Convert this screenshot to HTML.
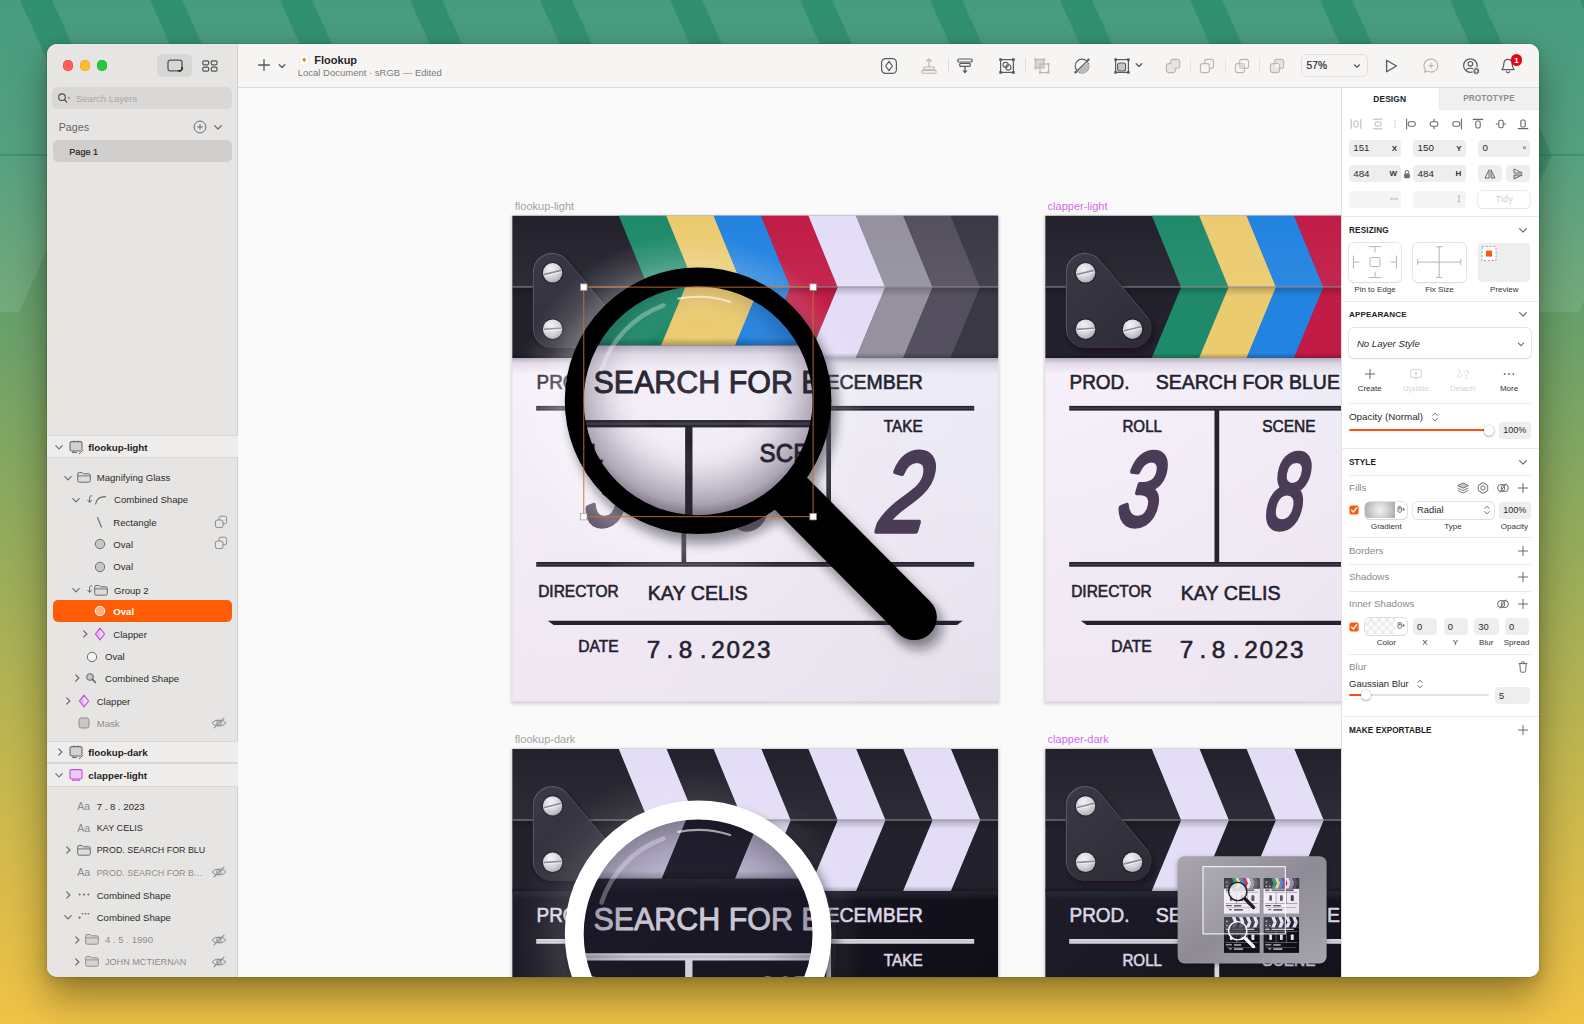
<!DOCTYPE html>
<html lang="en"><head><meta charset="utf-8"><title>Flookup — Sketch</title>
<style>
*{box-sizing:border-box;margin:0;padding:0}
html,body{width:1584px;height:1024px;overflow:hidden}
body{position:relative;font-family:"Liberation Sans",sans-serif;background:#8aa95e;color:#222;-webkit-font-smoothing:antialiased}
.abs{position:absolute}
#bg{position:absolute;left:0;top:0;width:1584px;height:1024px}
#win{position:absolute;left:47px;top:44px;width:1491.5px;height:933px;border-radius:10px;background:#fafafa;overflow:hidden;
 box-shadow:0 20px 38px 0 rgba(25,20,0,.40),0 2px 12px rgba(20,30,10,.16),0 0 0 .5px rgba(0,0,0,.16)}
#sidebar{position:absolute;left:0;top:0;width:191px;height:933px;background:#e7e5e3;border-right:1px solid #d3d1cf}
#toolbar{position:absolute;left:191px;top:0;width:1300.5px;height:43.5px;background:#f6f5f4;border-bottom:1px solid #dcdad8}
#canvas{position:absolute;left:191px;top:43.5px;width:1102.5px;height:889.5px;background:#fafafa;overflow:hidden}
#insp{position:absolute;left:1293.5px;top:43.5px;width:198px;height:889.5px;background:#fff;box-shadow:inset 1px 0 0 #e2e2e2}
svg{position:absolute;overflow:visible}
.t{position:absolute;white-space:nowrap;line-height:1}

</style></head>
<body>
<svg id="bg" width="1584" height="1024" viewBox="0 0 1584 1024">
<defs>
<linearGradient id="bgg" x1="0" y1="0" x2="0" y2="1">
<stop offset="0" stop-color="#2f8f70"/><stop offset="0.15" stop-color="#3f9570"/><stop offset="0.30" stop-color="#66a06c"/>
<stop offset="0.50" stop-color="#8faa5d"/><stop offset="0.72" stop-color="#bdb550"/><stop offset="0.88" stop-color="#dcbc49"/><stop offset="1" stop-color="#f0c246"/>
</linearGradient>
<linearGradient id="lowfade" x1="0" y1="155" x2="0" y2="312" gradientUnits="userSpaceOnUse">
<stop offset="0" stop-color="#fff" stop-opacity=".12"/><stop offset="1" stop-color="#fff" stop-opacity=".10"/></linearGradient>
</defs>
<rect width="1584" height="1024" fill="url(#bgg)"/>
<polygon fill="#fff" fill-opacity=".115" points="-208.9,-2.0 -110.9,-2.0 -40.2,155.0 -138.2,155.0"/>
<polygon fill="url(#lowfade)" points="-138.2,155.0 -40.2,155.0 -110.9,312.0 -208.9,312.0"/>
<polygon fill="#fff" fill-opacity=".115" points="-78.9,-2.0 19.1,-2.0 89.8,155.0 -8.2,155.0"/>
<polygon fill="url(#lowfade)" points="-8.2,155.0 89.8,155.0 19.1,312.0 -78.9,312.0"/>
<polygon fill="#fff" fill-opacity=".115" points="51.1,-2.0 149.1,-2.0 219.8,155.0 121.8,155.0"/>
<polygon fill="url(#lowfade)" points="121.8,155.0 219.8,155.0 149.1,312.0 51.1,312.0"/>
<polygon fill="#fff" fill-opacity=".115" points="181.1,-2.0 279.1,-2.0 349.8,155.0 251.8,155.0"/>
<polygon fill="url(#lowfade)" points="251.8,155.0 349.8,155.0 279.1,312.0 181.1,312.0"/>
<polygon fill="#fff" fill-opacity=".115" points="311.1,-2.0 409.1,-2.0 479.8,155.0 381.8,155.0"/>
<polygon fill="url(#lowfade)" points="381.8,155.0 479.8,155.0 409.1,312.0 311.1,312.0"/>
<polygon fill="#fff" fill-opacity=".115" points="441.1,-2.0 539.1,-2.0 609.8,155.0 511.8,155.0"/>
<polygon fill="url(#lowfade)" points="511.8,155.0 609.8,155.0 539.1,312.0 441.1,312.0"/>
<polygon fill="#fff" fill-opacity=".115" points="571.1,-2.0 669.1,-2.0 739.8,155.0 641.8,155.0"/>
<polygon fill="url(#lowfade)" points="641.8,155.0 739.8,155.0 669.1,312.0 571.1,312.0"/>
<polygon fill="#fff" fill-opacity=".115" points="701.1,-2.0 799.1,-2.0 869.8,155.0 771.8,155.0"/>
<polygon fill="url(#lowfade)" points="771.8,155.0 869.8,155.0 799.1,312.0 701.1,312.0"/>
<polygon fill="#fff" fill-opacity=".115" points="831.1,-2.0 929.1,-2.0 999.8,155.0 901.8,155.0"/>
<polygon fill="url(#lowfade)" points="901.8,155.0 999.8,155.0 929.1,312.0 831.1,312.0"/>
<polygon fill="#fff" fill-opacity=".115" points="961.1,-2.0 1059.1,-2.0 1129.8,155.0 1031.8,155.0"/>
<polygon fill="url(#lowfade)" points="1031.8,155.0 1129.8,155.0 1059.1,312.0 961.1,312.0"/>
<polygon fill="#fff" fill-opacity=".115" points="1091.1,-2.0 1189.1,-2.0 1259.8,155.0 1161.8,155.0"/>
<polygon fill="url(#lowfade)" points="1161.8,155.0 1259.8,155.0 1189.1,312.0 1091.1,312.0"/>
<polygon fill="#fff" fill-opacity=".115" points="1221.1,-2.0 1319.1,-2.0 1389.8,155.0 1291.8,155.0"/>
<polygon fill="url(#lowfade)" points="1291.8,155.0 1389.8,155.0 1319.1,312.0 1221.1,312.0"/>
<polygon fill="#fff" fill-opacity=".115" points="1351.1,-2.0 1449.1,-2.0 1519.8,155.0 1421.8,155.0"/>
<polygon fill="url(#lowfade)" points="1421.8,155.0 1519.8,155.0 1449.1,312.0 1351.1,312.0"/>
<polygon fill="#fff" fill-opacity=".115" points="1481.1,-2.0 1579.1,-2.0 1649.8,155.0 1551.8,155.0"/>
<polygon fill="url(#lowfade)" points="1551.8,155.0 1649.8,155.0 1579.1,312.0 1481.1,312.0"/>
<polygon fill="#fff" fill-opacity=".115" points="1611.1,-2.0 1709.1,-2.0 1779.8,155.0 1681.8,155.0"/>
<polygon fill="url(#lowfade)" points="1681.8,155.0 1779.8,155.0 1709.1,312.0 1611.1,312.0"/>
<polygon fill="#fff" fill-opacity=".115" points="1741.1,-2.0 1839.1,-2.0 1909.8,155.0 1811.8,155.0"/>
<polygon fill="url(#lowfade)" points="1811.8,155.0 1909.8,155.0 1839.1,312.0 1741.1,312.0"/>
<rect x="0" y="154" width="1584" height="2" fill="#2c8566" fill-opacity=".55"/>
</svg>
<div id="win">
<div id="sidebar">
<div class="abs" style="left:16.10px;top:16.30px;width:10.40px;height:10.40px;border-radius:50%;background:#fe5f57;box-shadow:inset 0 0 0 .5px #e2463f"></div>
<div class="abs" style="left:33.00px;top:16.30px;width:10.40px;height:10.40px;border-radius:50%;background:#febc2e;box-shadow:inset 0 0 0 .5px #dfa023"></div>
<div class="abs" style="left:49.50px;top:16.30px;width:10.40px;height:10.40px;border-radius:50%;background:#28c840;box-shadow:inset 0 0 0 .5px #1dad2b"></div>
<div class="abs" style="left:110.00px;top:10.00px;width:35.00px;height:23.00px;border-radius:5px;background:#d9d7d5"></div>
<svg style="left:120.00px;top:15.00px;" width="16" height="13" viewBox="0 0 16 13"><rect x="1" y="1.1" width="14" height="10.8" rx="2.4" fill="none" stroke="#555" stroke-width="1.3"/><path d="M11.2 11.9 h1.4 a2.4 2.4 0 0 0 2.4 -2.4 v-1.6" fill="none" stroke="#2a2a2a" stroke-width="1.6"/></svg>
<svg style="left:155.00px;top:15.50px;" width="16" height="12" viewBox="0 0 16 12"><rect x="0.8" y="0.8" width="5.8" height="4" rx="1.2" fill="none" stroke="#555" stroke-width="1.2"/><rect x="0.8" y="7.2" width="5.8" height="4" rx="1.2" fill="none" stroke="#555" stroke-width="1.2"/><rect x="9.2" y="0.8" width="5.8" height="4" rx="1.2" fill="none" stroke="#555" stroke-width="1.2"/><rect x="9.2" y="7.2" width="5.8" height="4" rx="1.2" fill="none" stroke="#555" stroke-width="1.2"/></svg>
<div class="abs" style="left:5.00px;top:43.20px;width:180.00px;height:22.20px;border-radius:5.5px;background:#dad8d6"></div>
<svg style="left:10.00px;top:48.00px;" width="14" height="12" viewBox="0 0 14 12"><circle cx="5" cy="5.2" r="3.3" fill="none" stroke="#4a4a4a" stroke-width="1.1"/><path d="M7.4 7.7 L9.8 10.2" stroke="#4a4a4a" stroke-width="1.2" stroke-linecap="round"/><path d="M10.6 5.6 h2.6 l-1.3 1.5z" fill="#4a4a4a"/></svg>
<div class="t" style="top:50.27px;font-size:9.5px;color:#a9a7a5;left:29.00px;">Search Layers</div>
<div class="t" style="top:78.04px;font-size:10.7px;color:#666;left:11.70px;">Pages</div>
<svg style="left:146.00px;top:76.00px;" width="14" height="14" viewBox="0 0 14 14"><circle cx="7" cy="7" r="5.9" fill="none" stroke="#6b6b6b" stroke-width="1"/><path d="M7 4.2 V9.8 M4.2 7 H9.8" stroke="#6b6b6b" stroke-width="1"/></svg>
<svg style="left:166.30px;top:77.60px;" width="10" height="10" viewBox="0 0 10 10"><path d="M1.6 3.5999999999999996 L5 7.0 L8.4 3.5999999999999996" fill="none" stroke="#6b6b6b" stroke-width="1.2" stroke-linecap="round" stroke-linejoin="round"/></svg>
<div class="abs" style="left:5.50px;top:96.00px;width:179.50px;height:22.30px;border-radius:5px;background:#d1cfcd"></div>
<div class="t" style="top:104.05px;font-size:9.1px;color:#1e1e1e;left:22.30px;-webkit-text-stroke:.2px #1e1e1e;">Page 1</div>
<div class="abs" style="left:0.00px;top:391.00px;width:191.00px;height:23.30px;background:#eeedec;border-top:1px solid #d9d7d5;border-bottom:1px solid #d9d7d5"></div><svg style="left:7.30px;top:397.65px;" width="10" height="10" viewBox="0 0 10 10"><path d="M1.7999999999999998 3.6999999999999997 L5 6.8999999999999995 L8.2 3.6999999999999997" fill="none" stroke="#6b6b6b" stroke-width="1.2" stroke-linecap="round" stroke-linejoin="round"/></svg><svg style="left:21.50px;top:396.15px;" width="16" height="15" viewBox="0 0 16 15"><rect x="1" y="1.6" width="12" height="9.4" rx="1.8" fill="#d4d2d0" stroke="#6b6b6b" stroke-width="1.1"/><path d="M5 .6 V1.6 M9 .6 V1.6 M4 11 V13 M3.4 12.6 H8" stroke="#6b6b6b" stroke-width="1" fill="none"/><path d="M9.3 13.6 L13.6 9.3 L14.6 10.3 L10.3 14.6 Z" fill="#6b6b6b" stroke="#eeedec" stroke-width=".8"/></svg><div class="t" style="top:399.19px;font-size:9.8px;color:#1e1e1e;font-weight:bold;left:41.30px;">flookup-light</div>
<div class="abs" style="left:0.00px;top:696.70px;width:191.00px;height:22.50px;background:#eeedec;border-top:1px solid #d9d7d5;border-bottom:1px solid #d9d7d5"></div><svg style="left:8.00px;top:702.95px;" width="10" height="10" viewBox="0 0 10 10"><path d="M3.6999999999999997 1.7999999999999998 L6.8999999999999995 5 L3.6999999999999997 8.2" fill="none" stroke="#6b6b6b" stroke-width="1.2" stroke-linecap="round" stroke-linejoin="round"/></svg><svg style="left:21.50px;top:701.45px;" width="16" height="15" viewBox="0 0 16 15"><rect x="1" y="1.6" width="12" height="9.4" rx="1.8" fill="#d4d2d0" stroke="#6b6b6b" stroke-width="1.1"/><path d="M5 .6 V1.6 M9 .6 V1.6 M4 11 V13 M3.4 12.6 H8" stroke="#6b6b6b" stroke-width="1" fill="none"/><path d="M9.3 13.6 L13.6 9.3 L14.6 10.3 L10.3 14.6 Z" fill="#6b6b6b" stroke="#eeedec" stroke-width=".8"/></svg><div class="t" style="top:704.49px;font-size:9.8px;color:#1e1e1e;font-weight:bold;left:41.30px;">flookup-dark</div>
<div class="abs" style="left:0.00px;top:719.20px;width:191.00px;height:23.50px;background:#eeedec;border-top:1px solid #d9d7d5;border-bottom:1px solid #d9d7d5"></div><svg style="left:7.30px;top:725.95px;" width="10" height="10" viewBox="0 0 10 10"><path d="M1.7999999999999998 3.6999999999999997 L5 6.8999999999999995 L8.2 3.6999999999999997" fill="none" stroke="#6b6b6b" stroke-width="1.2" stroke-linecap="round" stroke-linejoin="round"/></svg><svg style="left:21.50px;top:724.45px;" width="15" height="14" viewBox="0 0 15 14"><rect x="1" y="1.6" width="12" height="9.4" rx="1.6" fill="#f0c9f7" stroke="#c84be6" stroke-width="1.1"/><path d="M4 11 V13 M10 11 V13 M3.4 12.3 H10.6" stroke="#c84be6" stroke-width="1" fill="none"/></svg><div class="t" style="top:727.49px;font-size:9.8px;color:#1e1e1e;font-weight:bold;left:41.30px;">clapper-light</div>
<svg style="left:15.70px;top:428.70px;" width="10" height="10" viewBox="0 0 10 10"><path d="M1.7999999999999998 3.6999999999999997 L5 6.8999999999999995 L8.2 3.6999999999999997" fill="none" stroke="#6b6b6b" stroke-width="1.2" stroke-linecap="round" stroke-linejoin="round"/></svg>
<svg style="left:29.70px;top:427.20px;" width="14" height="12" viewBox="0 0 14 12"><path d="M.7 3 a1.5 1.5 0 0 1 1.5-1.5 h2.9 l1.3 1.3 h5.4 a1.5 1.5 0 0 1 1.5 1.5 v5.4 a1.5 1.5 0 0 1-1.5 1.5 h-9.6 a1.5 1.5 0 0 1-1.5-1.5z" fill="#dedcda" stroke="#6b6b6b" stroke-width="1" stroke-linejoin="round"/><path d="M.9 4.9 H13.1" stroke="#6b6b6b" stroke-width=".9"/></svg>
<div class="t" style="top:429.43px;font-size:9.6px;color:#2b2b2b;left:49.70px;">Magnifying Glass</div>
<svg style="left:24.00px;top:450.70px;" width="10" height="10" viewBox="0 0 10 10"><path d="M1.7999999999999998 3.6999999999999997 L5 6.8999999999999995 L8.2 3.6999999999999997" fill="none" stroke="#6b6b6b" stroke-width="1.2" stroke-linecap="round" stroke-linejoin="round"/></svg>
<svg style="left:39.00px;top:449.70px;" width="22" height="12" viewBox="0 0 22 12"><path d="M5.8 1.8 C3.8 1.6 3.6 2.8 3.6 4 V8.2 M1.6 6.2 L3.6 8.4 L5.6 6.2" fill="none" stroke="#6b6b6b" stroke-width="1" stroke-linecap="round"/><path d="M9.6 10 C10.2 5.4 13.6 2.6 19.6 2.6" fill="none" stroke="#6b6b6b" stroke-width="1.1" stroke-linecap="round"/></svg>
<div class="t" style="top:451.43px;font-size:9.6px;color:#2b2b2b;left:67.00px;">Combined Shape</div>
<svg style="left:48.00px;top:471.70px;" width="10" height="13" viewBox="0 0 10 13"><path d="M2.6 1.6 L6.4 11" stroke="#6b6b6b" stroke-width="1.2" stroke-linecap="round"/></svg>
<div class="t" style="top:474.43px;font-size:9.6px;color:#2b2b2b;left:66.30px;">Rectangle</div>
<svg style="left:167.00px;top:470.70px;" width="14" height="14" viewBox="0 0 14 14"><rect x="5" y="1.2" width="7.6" height="7.6" rx="2" fill="none" stroke="#8a8a8a" stroke-width="1"/><rect x="1.4" y="5" width="7.6" height="7.6" rx="2" fill="#e7e5e3" stroke="#8a8a8a" stroke-width="1"/></svg>
<svg style="left:47.00px;top:494.30px;" width="12" height="12" viewBox="0 0 12 12"><circle cx="6" cy="6" r="4.7" fill="#c9c7c5" stroke="#6b6b6b" stroke-width="1"/></svg>
<div class="t" style="top:496.03px;font-size:9.6px;color:#2b2b2b;left:66.30px;">Oval</div>
<svg style="left:167.00px;top:492.30px;" width="14" height="14" viewBox="0 0 14 14"><rect x="5" y="1.2" width="7.6" height="7.6" rx="2" fill="none" stroke="#8a8a8a" stroke-width="1"/><rect x="1.4" y="5" width="7.6" height="7.6" rx="2" fill="#e7e5e3" stroke="#8a8a8a" stroke-width="1"/></svg>
<svg style="left:47.00px;top:516.70px;" width="12" height="12" viewBox="0 0 12 12"><circle cx="6" cy="6" r="4.7" fill="#c9c7c5" stroke="#6b6b6b" stroke-width="1"/></svg>
<div class="t" style="top:518.43px;font-size:9.6px;color:#2b2b2b;left:66.30px;">Oval</div>
<svg style="left:24.00px;top:541.00px;" width="10" height="10" viewBox="0 0 10 10"><path d="M1.7999999999999998 3.6999999999999997 L5 6.8999999999999995 L8.2 3.6999999999999997" fill="none" stroke="#6b6b6b" stroke-width="1.2" stroke-linecap="round" stroke-linejoin="round"/></svg>
<svg style="left:39.00px;top:540.00px;" width="8" height="12" viewBox="0 0 8 12"><path d="M5.8 1.8 C3.8 1.6 3.6 2.8 3.6 4 V8.2 M1.6 6.2 L3.6 8.4 L5.6 6.2" fill="none" stroke="#6b6b6b" stroke-width="1" stroke-linecap="round"/></svg>
<svg style="left:47.00px;top:539.50px;" width="14" height="12" viewBox="0 0 14 12"><path d="M.7 3 a1.5 1.5 0 0 1 1.5-1.5 h2.9 l1.3 1.3 h5.4 a1.5 1.5 0 0 1 1.5 1.5 v5.4 a1.5 1.5 0 0 1-1.5 1.5 h-9.6 a1.5 1.5 0 0 1-1.5-1.5z" fill="#dedcda" stroke="#6b6b6b" stroke-width="1" stroke-linejoin="round"/><path d="M.9 4.9 H13.1" stroke="#6b6b6b" stroke-width=".9"/></svg>
<div class="t" style="top:541.73px;font-size:9.6px;color:#2b2b2b;left:67.00px;">Group 2</div>
<div class="abs" style="left:5.50px;top:556.00px;width:179.50px;height:22.30px;border-radius:5px;background:#ff5d05"></div>
<svg style="left:47.00px;top:561.30px;" width="12" height="12" viewBox="0 0 12 12"><circle cx="6" cy="6" r="4.7" fill="#ffae82" stroke="#fff" stroke-width="1"/></svg>
<div class="t" style="top:563.03px;font-size:9.6px;color:#fff;font-weight:bold;left:66.30px;">Oval</div>
<svg style="left:33.00px;top:585.00px;" width="10" height="10" viewBox="0 0 10 10"><path d="M3.6999999999999997 1.7999999999999998 L6.8999999999999995 5 L3.6999999999999997 8.2" fill="none" stroke="#6b6b6b" stroke-width="1.2" stroke-linecap="round" stroke-linejoin="round"/></svg>
<svg style="left:47.00px;top:583.00px;" width="12" height="14" viewBox="0 0 12 14"><path d="M6 1.2 L10.6 7 L6 12.8 L1.4 7 Z" fill="none" stroke="#c84be6" stroke-width="1.2" stroke-linejoin="round"/><path d="M6 1.2 L6 12.8 L1.4 7Z" fill="#c84be6" fill-opacity=".25"/></svg>
<div class="t" style="top:585.73px;font-size:9.6px;color:#2b2b2b;left:66.30px;">Clapper</div>
<svg style="left:38.70px;top:606.70px;" width="12" height="12" viewBox="0 0 12 12"><circle cx="6" cy="6" r="4.7" fill="#f4f3f2" stroke="#6b6b6b" stroke-width="1"/></svg>
<div class="t" style="top:608.43px;font-size:9.6px;color:#2b2b2b;left:58.00px;">Oval</div>
<svg style="left:24.70px;top:629.00px;" width="10" height="10" viewBox="0 0 10 10"><path d="M3.6999999999999997 1.7999999999999998 L6.8999999999999995 5 L3.6999999999999997 8.2" fill="none" stroke="#6b6b6b" stroke-width="1.2" stroke-linecap="round" stroke-linejoin="round"/></svg>
<svg style="left:38.00px;top:628.00px;" width="12" height="12" viewBox="0 0 12 12"><circle cx="5" cy="5" r="3.2" fill="#c9c7c5" stroke="#6b6b6b" stroke-width="1.1"/><path d="M7.4 7.4 L10.4 10.4" stroke="#6b6b6b" stroke-width="1.6" stroke-linecap="round"/></svg>
<div class="t" style="top:629.73px;font-size:9.6px;color:#2b2b2b;left:58.00px;">Combined Shape</div>
<svg style="left:16.30px;top:652.30px;" width="10" height="10" viewBox="0 0 10 10"><path d="M3.6999999999999997 1.7999999999999998 L6.8999999999999995 5 L3.6999999999999997 8.2" fill="none" stroke="#6b6b6b" stroke-width="1.2" stroke-linecap="round" stroke-linejoin="round"/></svg>
<svg style="left:30.50px;top:650.30px;" width="12" height="14" viewBox="0 0 12 14"><path d="M6 1.2 L10.6 7 L6 12.8 L1.4 7 Z" fill="none" stroke="#c84be6" stroke-width="1.2" stroke-linejoin="round"/><path d="M6 1.2 L6 12.8 L1.4 7Z" fill="#c84be6" fill-opacity=".25"/></svg>
<div class="t" style="top:653.03px;font-size:9.6px;color:#2b2b2b;left:49.70px;">Clapper</div>
<svg style="left:31.00px;top:673.30px;" width="12" height="12" viewBox="0 0 12 12"><rect x="1" y="1" width="10" height="10" rx="2.2" fill="#c9c7c5" stroke="#8f8d8b" stroke-width="1"/></svg>
<div class="t" style="top:675.03px;font-size:9.6px;color:#8f8d8b;left:49.70px;">Mask</div>
<svg style="left:163.70px;top:673.30px;" width="16" height="12" viewBox="0 0 16 12"><path d="M1.2 6 C3.5 2.2 12.5 2.2 14.8 6 C12.5 9.8 3.5 9.8 1.2 6Z" fill="none" stroke="#8a8a8a" stroke-width="1"/><circle cx="8" cy="6" r="2.3" fill="none" stroke="#8a8a8a" stroke-width="1"/><path d="M3 10.8 L13 1.2" stroke="#8a8a8a" stroke-width="1.1" stroke-linecap="round"/></svg>
<div class="t" style="top:756.83px;font-size:10.5px;color:#8a8a8a;left:36.70px;transform:translateX(-50%);">Aa</div>
<div class="t" style="top:757.73px;font-size:9.6px;color:#2b2b2b;left:49.70px;">7 . 8 . 2023</div>
<div class="t" style="top:778.53px;font-size:10.5px;color:#8a8a8a;left:36.70px;transform:translateX(-50%);">Aa</div>
<div class="t" style="top:779.92px;font-size:9.1px;color:#2b2b2b;left:49.70px;">KAY CELIS</div>
<svg style="left:16.30px;top:801.00px;" width="10" height="10" viewBox="0 0 10 10"><path d="M3.6999999999999997 1.7999999999999998 L6.8999999999999995 5 L3.6999999999999997 8.2" fill="none" stroke="#6b6b6b" stroke-width="1.2" stroke-linecap="round" stroke-linejoin="round"/></svg>
<svg style="left:29.70px;top:799.50px;" width="14" height="12" viewBox="0 0 14 12"><path d="M.7 3 a1.5 1.5 0 0 1 1.5-1.5 h2.9 l1.3 1.3 h5.4 a1.5 1.5 0 0 1 1.5 1.5 v5.4 a1.5 1.5 0 0 1-1.5 1.5 h-9.6 a1.5 1.5 0 0 1-1.5-1.5z" fill="#dedcda" stroke="#6b6b6b" stroke-width="1" stroke-linejoin="round"/><path d="M.9 4.9 H13.1" stroke="#6b6b6b" stroke-width=".9"/></svg>
<div class="t" style="top:802.31px;font-size:8.9px;color:#2b2b2b;left:49.70px;">PROD. SEARCH FOR BLU</div>
<div class="t" style="top:823.13px;font-size:10.5px;color:#8a8a8a;left:36.70px;transform:translateX(-50%);">Aa</div>
<div class="t" style="top:824.61px;font-size:8.9px;color:#8f8d8b;left:49.70px;">PROD. SEARCH FOR B…</div>
<svg style="left:163.70px;top:822.30px;" width="16" height="12" viewBox="0 0 16 12"><path d="M1.2 6 C3.5 2.2 12.5 2.2 14.8 6 C12.5 9.8 3.5 9.8 1.2 6Z" fill="none" stroke="#8a8a8a" stroke-width="1"/><circle cx="8" cy="6" r="2.3" fill="none" stroke="#8a8a8a" stroke-width="1"/><path d="M3 10.8 L13 1.2" stroke="#8a8a8a" stroke-width="1.1" stroke-linecap="round"/></svg>
<svg style="left:16.30px;top:846.00px;" width="10" height="10" viewBox="0 0 10 10"><path d="M3.6999999999999997 1.7999999999999998 L6.8999999999999995 5 L3.6999999999999997 8.2" fill="none" stroke="#6b6b6b" stroke-width="1.2" stroke-linecap="round" stroke-linejoin="round"/></svg>
<svg style="left:31.00px;top:848.00px;" width="12" height="6" viewBox="0 0 12 6"><circle cx="1.6" cy="2.6" r="1" fill="#6b6b6b"/><circle cx="6" cy="2.6" r="1" fill="#6b6b6b"/><circle cx="10.4" cy="2.6" r="1" fill="#6b6b6b"/></svg>
<div class="t" style="top:846.73px;font-size:9.6px;color:#2b2b2b;left:49.70px;">Combined Shape</div>
<svg style="left:16.30px;top:868.30px;" width="10" height="10" viewBox="0 0 10 10"><path d="M1.7999999999999998 3.6999999999999997 L5 6.8999999999999995 L8.2 3.6999999999999997" fill="none" stroke="#6b6b6b" stroke-width="1.2" stroke-linecap="round" stroke-linejoin="round"/></svg>
<svg style="left:31.00px;top:868.30px;" width="12" height="10" viewBox="0 0 12 10"><circle cx="1.6" cy="5.6" r="1.1" fill="#6b6b6b"/><rect x="3.6" y="1" width="1.6" height="1.4" fill="#6b6b6b"/><rect x="6.6" y="1" width="1.6" height="1.4" fill="#6b6b6b"/><rect x="9.6" y="1" width="1.6" height="1.4" fill="#6b6b6b"/></svg>
<div class="t" style="top:869.03px;font-size:9.6px;color:#2b2b2b;left:49.70px;">Combined Shape</div>
<svg style="left:24.70px;top:890.70px;" width="10" height="10" viewBox="0 0 10 10"><path d="M3.6999999999999997 1.7999999999999998 L6.8999999999999995 5 L3.6999999999999997 8.2" fill="none" stroke="#6b6b6b" stroke-width="1.2" stroke-linecap="round" stroke-linejoin="round"/></svg>
<svg style="left:38.30px;top:889.20px;" width="14" height="12" viewBox="0 0 14 12"><path d="M.7 3 a1.5 1.5 0 0 1 1.5-1.5 h2.9 l1.3 1.3 h5.4 a1.5 1.5 0 0 1 1.5 1.5 v5.4 a1.5 1.5 0 0 1-1.5 1.5 h-9.6 a1.5 1.5 0 0 1-1.5-1.5z" fill="#d6d4d2" stroke="#8f8d8b" stroke-width="1" stroke-linejoin="round"/><path d="M.9 4.9 H13.1" stroke="#8f8d8b" stroke-width=".9"/></svg>
<div class="t" style="top:891.43px;font-size:9.6px;color:#8f8d8b;left:58.00px;">4 . 5 . 1990</div>
<svg style="left:163.70px;top:889.70px;" width="16" height="12" viewBox="0 0 16 12"><path d="M1.2 6 C3.5 2.2 12.5 2.2 14.8 6 C12.5 9.8 3.5 9.8 1.2 6Z" fill="none" stroke="#8a8a8a" stroke-width="1"/><circle cx="8" cy="6" r="2.3" fill="none" stroke="#8a8a8a" stroke-width="1"/><path d="M3 10.8 L13 1.2" stroke="#8a8a8a" stroke-width="1.1" stroke-linecap="round"/></svg>
<svg style="left:24.70px;top:912.70px;" width="10" height="10" viewBox="0 0 10 10"><path d="M3.6999999999999997 1.7999999999999998 L6.8999999999999995 5 L3.6999999999999997 8.2" fill="none" stroke="#6b6b6b" stroke-width="1.2" stroke-linecap="round" stroke-linejoin="round"/></svg>
<svg style="left:38.30px;top:911.20px;" width="14" height="12" viewBox="0 0 14 12"><path d="M.7 3 a1.5 1.5 0 0 1 1.5-1.5 h2.9 l1.3 1.3 h5.4 a1.5 1.5 0 0 1 1.5 1.5 v5.4 a1.5 1.5 0 0 1-1.5 1.5 h-9.6 a1.5 1.5 0 0 1-1.5-1.5z" fill="#d6d4d2" stroke="#8f8d8b" stroke-width="1" stroke-linejoin="round"/><path d="M.9 4.9 H13.1" stroke="#8f8d8b" stroke-width=".9"/></svg>
<div class="t" style="top:913.92px;font-size:9.1px;color:#8f8d8b;left:58.00px;">JOHN MCTIERNAN</div>
<svg style="left:163.70px;top:911.70px;" width="16" height="12" viewBox="0 0 16 12"><path d="M1.2 6 C3.5 2.2 12.5 2.2 14.8 6 C12.5 9.8 3.5 9.8 1.2 6Z" fill="none" stroke="#8a8a8a" stroke-width="1"/><circle cx="8" cy="6" r="2.3" fill="none" stroke="#8a8a8a" stroke-width="1"/><path d="M3 10.8 L13 1.2" stroke="#8a8a8a" stroke-width="1.1" stroke-linecap="round"/></svg>
</div>
<div id="toolbar">
<svg style="left:16.40px;top:11.40px;" width="20" height="20" viewBox="0 0 20 20"><path d="M10 4.6 V15.4 M4.6 10 H15.4" stroke="#5a5a5a" stroke-width="1.3" stroke-linecap="round"/></svg>
<svg style="left:33.60px;top:11.80px;" width="20" height="20" viewBox="0 0 20 20"><path d="M7.2 8.8 L10 11.4 L12.8 8.8" fill="none" stroke="#5a5a5a" stroke-width="1.3" stroke-linecap="round" stroke-linejoin="round"/></svg>
<svg style="left:61.00px;top:10.00px;" width="11" height="12" viewBox="0 0 11 12"><path d="M1.5 .8 h5.6 l2.6 2.6 v7 a.8 .8 0 0 1 -.8 .8 h-7.4 a.8 .8 0 0 1 -.8 -.8 v-8.8 a.8 .8 0 0 1 .8 -.8z" fill="#fdfdfd" stroke="#e3e1df" stroke-width=".6"/><path d="M3.2 5 L5.2 3.6 L7.2 5 L5.2 8 Z" fill="#f7a928"/><path d="M3.2 5 H7.2 L5.2 8Z" fill="#ea7c12"/></svg>
<div class="t" style="top:11.11px;font-size:11px;color:#262626;font-weight:bold;left:76.30px;">Flookup</div>
<div class="t" style="top:23.97px;font-size:9.5px;color:#7c7a78;left:59.70px;">Local Document · sRGB — Edited</div>
<svg style="left:640.80px;top:11.60px;" width="20" height="20" viewBox="0 0 20 20"><rect x="2.6" y="2.6" width="14.8" height="14.8" rx="4" fill="none" stroke="#5a5a5a" stroke-width="1.2"/><path d="M10 5.4 L13.4 10 L10 14.6 L6.6 10Z" fill="none" stroke="#5a5a5a" stroke-width="1.2" stroke-linejoin="round"/></svg>
<svg style="left:681.00px;top:11.60px;" width="20" height="20" viewBox="0 0 20 20"><path d="M10 3 V11 M7.6 5.2 L10 2.8 L12.4 5.2" fill="none" stroke="#b9b7b5" stroke-width="1.2" stroke-linecap="round" stroke-linejoin="round"/><rect x="4.6" y="11" width="10.8" height="2.8" rx="1.2" fill="none" stroke="#b9b7b5" stroke-width="1.1"/><rect x="2.8" y="14.4" width="14.4" height="2.8" rx="1.2" fill="none" stroke="#b9b7b5" stroke-width="1.1"/></svg>
<div class="abs" style="left:709.50px;top:14.00px;width:1.00px;height:15.00px;background:#e0dedc"></div>
<svg style="left:717.00px;top:11.60px;" width="20" height="20" viewBox="0 0 20 20"><rect x="2.8" y="3" width="14.4" height="3" rx="1.3" fill="none" stroke="#5a5a5a" stroke-width="1.2"/><rect x="4.6" y="7.4" width="10.8" height="3" rx="1.3" fill="none" stroke="#5a5a5a" stroke-width="1.2"/><path d="M10 11 V16.6" stroke="#5a5a5a" stroke-width="1.3"/><path d="M7.4 14.4 L10 17.6 L12.6 14.4Z" fill="#5a5a5a"/></svg>
<svg style="left:758.70px;top:11.60px;" width="20" height="20" viewBox="0 0 20 20"><rect x="3.6" y="3.6" width="12.8" height="12.8" fill="none" stroke="#5a5a5a" stroke-width="1.2"/><rect x="2.2" y="2.2" width="2.8" height="2.8" rx=".6" fill="#5a5a5a"/><rect x="2.2" y="15" width="2.8" height="2.8" rx=".6" fill="#5a5a5a"/><rect x="15" y="2.2" width="2.8" height="2.8" rx=".6" fill="#5a5a5a"/><rect x="15" y="15" width="2.8" height="2.8" rx=".6" fill="#5a5a5a"/><circle cx="8.6" cy="8.8" r="2.6" fill="none" stroke="#5a5a5a" stroke-width="1.1"/><circle cx="11.4" cy="11.4" r="2.6" fill="none" stroke="#5a5a5a" stroke-width="1.1"/></svg>
<div class="abs" style="left:786.50px;top:14.00px;width:1.00px;height:15.00px;background:#e0dedc"></div>
<svg style="left:794.00px;top:11.60px;" width="20" height="20" viewBox="0 0 20 20"><rect x="3.4" y="3.4" width="8.6" height="8.6" fill="#d9d7d5" stroke="#b9b7b5" stroke-width="1.1"/><rect x="8" y="8" width="8.6" height="8.6" fill="none" stroke="#b9b7b5" stroke-width="1.1"/><rect x="2.4" y="2.4" width="2.2" height="2.2" fill="#b9b7b5"/><rect x="11" y="2.4" width="2.2" height="2.2" fill="#b9b7b5"/><rect x="2.4" y="11" width="2.2" height="2.2" fill="#b9b7b5"/><rect x="15.4" y="7" width="2.2" height="2.2" fill="#b9b7b5"/><rect x="7" y="15.4" width="2.2" height="2.2" fill="#b9b7b5"/><rect x="15.4" y="15.4" width="2.2" height="2.2" fill="#b9b7b5"/></svg>
<svg style="left:834.40px;top:11.60px;" width="20" height="20" viewBox="0 0 20 20"><circle cx="10" cy="10" r="6.8" fill="none" stroke="#5a5a5a" stroke-width="1.2"/><path d="M4.4 14.2 A6.8 6.8 0 0 0 15.8 6.2 Z" fill="#bdbbb9"/><path d="M3.4 16.4 L16.6 3.6" stroke="#5a5a5a" stroke-width="1.2" stroke-linecap="round"/><circle cx="3.6" cy="16.2" r="1.2" fill="#5a5a5a"/><circle cx="16.4" cy="3.8" r="1.2" fill="#5a5a5a"/></svg>
<svg style="left:873.80px;top:11.60px;" width="20" height="20" viewBox="0 0 20 20"><rect x="3.6" y="3.6" width="12.8" height="12.8" fill="none" stroke="#5a5a5a" stroke-width="1.2"/><rect x="2.3" y="2.3" width="2.6" height="2.6" rx=".5" fill="#5a5a5a"/><rect x="2.3" y="15.1" width="2.6" height="2.6" rx=".5" fill="#5a5a5a"/><rect x="15.1" y="2.3" width="2.6" height="2.6" rx=".5" fill="#5a5a5a"/><rect x="15.1" y="15.1" width="2.6" height="2.6" rx=".5" fill="#5a5a5a"/><rect x="5.6" y="7" width="8" height="8" rx="2" fill="#c9c7c5" stroke="#5a5a5a" stroke-width="1.1"/></svg>
<svg style="left:891.30px;top:11.00px;" width="20" height="20" viewBox="0 0 20 20"><path d="M7.2 8.8 L10 11.4 L12.8 8.8" fill="none" stroke="#5a5a5a" stroke-width="1.3" stroke-linecap="round" stroke-linejoin="round"/></svg>
<svg style="left:924.60px;top:11.60px;" width="20" height="20" viewBox="0 0 20 20"><path d="M10 3.4 h4.2 a2.4 2.4 0 0 1 2.4 2.4 v4.2 a2.4 2.4 0 0 1 -2.4 2.4 h-1.8 v1.8 a2.4 2.4 0 0 1 -2.4 2.4 h-4.2 a2.4 2.4 0 0 1 -2.4 -2.4 v-4.2 a2.4 2.4 0 0 1 2.4 -2.4 h1.8 v-1.8 a2.4 2.4 0 0 1 2.4 -2.4z" fill="#e7e5e3" stroke="#b9b7b5" stroke-width="1.1"/></svg>
<div class="abs" style="left:951.80px;top:14.00px;width:1.00px;height:15.00px;background:#e6e4e2"></div>
<svg style="left:959.20px;top:11.60px;" width="20" height="20" viewBox="0 0 20 20"><rect x="7.6" y="3.4" width="9" height="9" rx="2.4" fill="none" stroke="#b9b7b5" stroke-width="1.1"/><rect x="3.4" y="7.6" width="9" height="9" rx="2.4" fill="#f6f5f4" stroke="#b9b7b5" stroke-width="1.1"/></svg>
<div class="abs" style="left:986.50px;top:14.00px;width:1.00px;height:15.00px;background:#e6e4e2"></div>
<svg style="left:994.00px;top:11.60px;" width="20" height="20" viewBox="0 0 20 20"><rect x="7.6" y="3.4" width="9" height="9" rx="2.4" fill="none" stroke="#b9b7b5" stroke-width="1.1"/><rect x="3.4" y="7.6" width="9" height="9" rx="2.4" fill="none" stroke="#b9b7b5" stroke-width="1.1"/><rect x="7.6" y="7.6" width="4.8" height="4.8" rx="1" fill="#dddbd9"/></svg>
<div class="abs" style="left:1021.30px;top:14.00px;width:1.00px;height:15.00px;background:#e6e4e2"></div>
<svg style="left:1028.80px;top:11.60px;" width="20" height="20" viewBox="0 0 20 20"><rect x="7.6" y="3.4" width="9" height="9" rx="2.4" fill="#e7e5e3" stroke="#b9b7b5" stroke-width="1.1"/><rect x="3.4" y="7.6" width="9" height="9" rx="2.4" fill="#e7e5e3" stroke="#b9b7b5" stroke-width="1.1"/><rect x="8.2" y="8.2" width="3.6" height="3.6" fill="#f6f5f4"/></svg>
<div class="abs" style="left:1063.00px;top:10.40px;width:67.00px;height:22.60px;border-radius:5.5px;border:1px solid #e0dedc;background:#f6f5f4"></div>
<div class="t" style="top:17.46px;font-size:10.2px;color:#2b2b2b;left:1068.60px;-webkit-text-stroke:.2px #2b2b2b;">57%</div>
<svg style="left:1109.20px;top:11.60px;" width="20" height="20" viewBox="0 0 20 20"><path d="M7.4 8.8 L10 11.3 L12.6 8.8" fill="none" stroke="#5a5a5a" stroke-width="1.2" stroke-linecap="round" stroke-linejoin="round"/></svg>
<svg style="left:1143.40px;top:11.60px;" width="20" height="20" viewBox="0 0 20 20"><path d="M5.6 4.2 L15.4 10 L5.6 15.8Z" fill="none" stroke="#5a5a5a" stroke-width="1.3" stroke-linejoin="round"/></svg>
<svg style="left:1183.00px;top:11.60px;" width="20" height="20" viewBox="0 0 20 20"><path d="M10 3.2 a6.8 6.4 0 1 1 -3.6 11.8 l-3 1.2 l1 -2.8 a6.8 6.4 0 0 1 5.6 -10.2z" fill="none" stroke="#b9b7b5" stroke-width="1.2" stroke-linejoin="round"/><path d="M10 7 V12.2 M7.4 9.6 H12.6" stroke="#b9b7b5" stroke-width="1.1"/></svg>
<svg style="left:1223.00px;top:11.60px;" width="20" height="20" viewBox="0 0 20 20"><circle cx="9.4" cy="9.6" r="6.8" fill="none" stroke="#5a5a5a" stroke-width="1.2"/><circle cx="9.4" cy="7.8" r="2.3" fill="none" stroke="#5a5a5a" stroke-width="1.1"/><path d="M5 14.6 C5.6 11.4 13.2 11.4 13.8 14.6" fill="none" stroke="#5a5a5a" stroke-width="1.1"/><circle cx="15.2" cy="15" r="3.4" fill="#5a5a5a" stroke="#f6f5f4" stroke-width="1"/><path d="M15.2 13.2 V16.8 M13.4 15 H17" stroke="#f6f5f4" stroke-width="1"/></svg>
<svg style="left:1259.60px;top:12.20px;" width="20" height="20" viewBox="0 0 20 20"><path d="M10 3.4 C6.8 3.4 5.8 6 5.8 8.6 C5.8 11.4 4.6 12.6 3.8 13.6 H16.2 C15.4 12.6 14.2 11.4 14.2 8.6 C14.2 6 13.2 3.4 10 3.4Z" fill="none" stroke="#5a5a5a" stroke-width="1.2" stroke-linejoin="round"/><path d="M8.4 15.6 A1.7 1.7 0 0 0 11.6 15.6" fill="none" stroke="#5a5a5a" stroke-width="1.2" stroke-linecap="round"/></svg>
<div class="abs" style="left:1272.80px;top:10.40px;width:11.60px;height:11.60px;border-radius:50%;background:#e0071d"></div>
<div class="t" style="top:12.88px;font-size:8px;color:#fff;font-weight:bold;left:1278.60px;transform:translateX(-50%);">1</div>
</div>
<div id="canvas">
<svg style="left:0;top:0" width="1102.5" height="889.5" viewBox="238 87.5 1102.5 889.5">
<defs>
<linearGradient id="slate-light" x1="0" y1="0" x2="1" y2="1"><stop offset="0" stop-color="#f8f1fb"/><stop offset=".55" stop-color="#efe8f3"/><stop offset="1" stop-color="#e6e0ec"/></linearGradient>
<linearGradient id="slate-tint" x1="1" y1="0" x2="0" y2="1"><stop offset="0" stop-color="#e9ecf6" stop-opacity=".75"/><stop offset=".5" stop-color="#e9ecf6" stop-opacity="0"/><stop offset="1" stop-color="#f3e4f1" stop-opacity=".5"/></linearGradient>
<linearGradient id="slate-dark" x1="0" y1="0" x2="1" y2=".6"><stop offset="0" stop-color="#1d1c28"/><stop offset=".6" stop-color="#13121c"/><stop offset="1" stop-color="#0e0d16"/></linearGradient>
<linearGradient id="under-light" x1="0" y1="0" x2="0" y2="1"><stop offset="0" stop-color="#4a4060" stop-opacity=".38"/><stop offset=".35" stop-color="#4a4060" stop-opacity=".12"/><stop offset="1" stop-color="#4a4060" stop-opacity="0"/></linearGradient>
<linearGradient id="under-dark" x1="0" y1="0" x2="0" y2="1"><stop offset="0" stop-color="#3a3846" stop-opacity=".5"/><stop offset="1" stop-color="#3a3846" stop-opacity="0"/></linearGradient>
<linearGradient id="armhi" x1="0" y1="0" x2="0" y2="1"><stop offset="0" stop-color="#fff" stop-opacity="0"/><stop offset="1" stop-color="#fff" stop-opacity=".05"/></linearGradient>
<linearGradient id="armsh" x1="0" y1="0" x2="0" y2="1"><stop offset="0" stop-color="#000" stop-opacity=".22"/><stop offset="1" stop-color="#000" stop-opacity="0"/></linearGradient>
<linearGradient id="armbot" x1="0" y1="0" x2="0" y2="1"><stop offset="0" stop-color="#000" stop-opacity="0"/><stop offset="1" stop-color="#000" stop-opacity=".25"/></linearGradient>
<linearGradient id="plate" x1="20" y1="38" x2="100" y2="134" gradientUnits="userSpaceOnUse"><stop offset="0" stop-color="#3a3945"/><stop offset="1" stop-color="#2c2b36"/></linearGradient>
<radialGradient id="screw" cx=".4" cy=".3" r=".8"><stop offset="0" stop-color="#f4f2f6"/><stop offset=".55" stop-color="#d5d2d9"/><stop offset="1" stop-color="#a5a2ab"/></radialGradient>
<radialGradient id="glow"><stop offset="0" stop-color="#fff" stop-opacity=".36"/><stop offset=".72" stop-color="#fff" stop-opacity=".34"/><stop offset=".86" stop-color="#fff" stop-opacity=".13"/><stop offset="1" stop-color="#fff" stop-opacity="0"/></radialGradient>
<radialGradient id="lensshade-light" cx=".5" cy=".42" r=".58"><stop offset="0" stop-color="#fff" stop-opacity=".1"/><stop offset=".45" stop-color="#fff" stop-opacity="0"/><stop offset=".72" stop-color="#3b3048" stop-opacity=".16"/><stop offset=".9" stop-color="#30263c" stop-opacity=".36"/><stop offset="1" stop-color="#2a2036" stop-opacity=".6"/></radialGradient>
<radialGradient id="lensshade-dark" cx=".5" cy=".62" r=".66"><stop offset="0" stop-color="#241d38" stop-opacity=".04"/><stop offset=".45" stop-color="#241d38" stop-opacity=".1"/><stop offset=".75" stop-color="#1d1730" stop-opacity=".3"/><stop offset="1" stop-color="#0c0a14" stop-opacity=".52"/></radialGradient>
<clipPath id="lensclip"><circle cx="185.9" cy="185.2" r="115.7"/></clipPath>
<clipPath id="abclip"><rect x="0" y="0" width="486" height="486"/></clipPath>
<filter id="blur3" filterUnits="userSpaceOnUse" x="-60" y="-60" width="2000" height="2000"><feGaussianBlur stdDeviation="2.5"/></filter>
<filter id="blur7" filterUnits="userSpaceOnUse" x="-60" y="-60" width="700" height="700"><feGaussianBlur stdDeviation="6"/></filter>
<filter id="abshadow" x="-5%" y="-5%" width="110%" height="110%"><feGaussianBlur stdDeviation="1.6"/></filter>
<linearGradient id="mmbg" x1="0" y1="0" x2="1" y2="1"><stop offset="0" stop-color="#a9a6af"/><stop offset=".5" stop-color="#8f8b96"/><stop offset="1" stop-color="#a7a4ad"/></linearGradient>
</defs>
<text x="514.8" y="209.4" font-family="'Liberation Sans',sans-serif" font-size="11" fill="#a3a3a3">flookup-light</text>
<text x="1047.6" y="209.4" font-family="'Liberation Sans',sans-serif" font-size="11" fill="#d36ce8">clapper-light</text>
<text x="514.8" y="742.4" font-family="'Liberation Sans',sans-serif" font-size="11" fill="#a3a3a3">flookup-dark</text>
<text x="1047.6" y="742.4" font-family="'Liberation Sans',sans-serif" font-size="11" fill="#d36ce8">clapper-dark</text>
<g transform="translate(512.2,215.1)"><rect x="-1" y="0" width="488" height="488.5" fill="#000" fill-opacity=".16" filter="url(#abshadow)"/><g clip-path="url(#abclip)"><rect x="0" y="141.4" width="486" height="344.6" fill="url(#slate-light)"/><rect x="0" y="141.4" width="486" height="344.6" fill="url(#slate-tint)"/><rect x="0" y="142.4" width="486" height="16" fill="url(#under-light)"/><g fill="#24222e"><rect x="24" y="190.3" width="438" height="4.7"/><rect x="169.3" y="192" width="4.7" height="157"/><rect x="314.1" y="192" width="4.7" height="157"/><rect x="24" y="346.4" width="438" height="4.7"/><polygon points="35.6,405.2 450.6,405.2 444.8,409.4 41.4,409.4"/><g fill="#fff" fill-opacity="0.13"><rect x="24" y="191.8" width="438" height="1.6"/><rect x="24" y="347.9" width="438" height="1.6"/></g></g><g font-family="'Liberation Sans',sans-serif" stroke="#24222e" stroke-width=".6" stroke-linejoin="round"><text x="24.3" y="173.1" font-size="20.3" fill="#24222e" textLength="60.0" lengthAdjust="spacingAndGlyphs">PROD.</text><text x="110.5" y="173.1" font-size="20.3" fill="#24222e" textLength="300.2" lengthAdjust="spacingAndGlyphs">SEARCH FOR BLUE DECEMBER</text><text x="97.0" y="216.9" font-size="16.6" fill="#24222e" text-anchor="middle" textLength="39.5" lengthAdjust="spacingAndGlyphs">ROLL</text><text x="243.7" y="216.9" font-size="16.6" fill="#24222e" text-anchor="middle" textLength="53.4" lengthAdjust="spacingAndGlyphs">SCENE</text><text x="391.0" y="216.9" font-size="16.6" fill="#24222e" text-anchor="middle" textLength="38.9" lengthAdjust="spacingAndGlyphs">TAKE</text><text x="26.0" y="381.7" font-size="16.6" fill="#24222e" textLength="80.5" lengthAdjust="spacingAndGlyphs">DIRECTOR</text><text x="135.5" y="384.7" font-size="20.3" fill="#24222e" textLength="99.8" lengthAdjust="spacingAndGlyphs">KAY CELIS</text><text x="66.0" y="436.4" font-size="16.6" fill="#24222e" textLength="40.5" lengthAdjust="spacingAndGlyphs">DATE</text><text x="134.6 154.2 166.6 187.5 199.0 214.3 229.6 244.9" y="442.4" font-size="24.3" fill="#24222e">7.8.2023</text><g transform="translate(97.3,273.2) skewX(-9) translate(-97.3,-273.2)"><text x="76.6" y="309.2" font-size="104" fill="#4a3b57" textLength="41.5" lengthAdjust="spacingAndGlyphs" font-style="italic" stroke="#4a3b57" stroke-width="5.4" stroke-linejoin="round" stroke-linecap="round">3</text></g><g transform="translate(242.9,275.2) skewX(-9) translate(-242.9,-275.2)"><text x="224.2" y="312.3" font-size="107" fill="#4a3b57" textLength="37.5" lengthAdjust="spacingAndGlyphs" font-style="italic" stroke="#4a3b57" stroke-width="5.4" stroke-linejoin="round" stroke-linecap="round">8</text></g><g transform="translate(395.2,276.5) skewX(-9) translate(-395.2,-276.5)"><text x="371.0" y="315.8" font-size="113" fill="#4a3b57" textLength="48.5" lengthAdjust="spacingAndGlyphs" font-style="italic" stroke="#4a3b57" stroke-width="5.4" stroke-linejoin="round" stroke-linecap="round">2</text></g></g><rect x="0" y="0" width="486" height="142.4" fill="#22212c"/><polygon fill="#1e8a6a" points="106.5,0.0 154.3,0.0 183.7,71.6 154.3,142.4 106.5,142.4 135.9,71.6"/><polygon fill="#ebcb70" points="153.9,0.0 201.7,0.0 231.1,71.6 201.7,142.4 153.9,142.4 183.3,71.6"/><polygon fill="#2283e0" points="201.3,0.0 249.1,0.0 278.5,71.6 249.1,142.4 201.3,142.4 230.7,71.6"/><polygon fill="#c01c46" points="248.7,0.0 296.5,0.0 325.9,71.6 296.5,142.4 248.7,142.4 278.1,71.6"/><polygon fill="#e4ddf7" points="296.1,0.0 343.9,0.0 373.3,71.6 343.9,142.4 296.1,142.4 325.5,71.6"/><polygon fill="#95919f" points="343.5,0.0 391.3,0.0 420.7,71.6 391.3,142.4 343.5,142.4 372.9,71.6"/><polygon fill="#55505f" points="390.9,0.0 438.7,0.0 468.1,71.6 438.7,142.4 390.9,142.4 420.3,71.6"/><polygon fill="#3b3845" points="438.3,0.0 485.7,0.0 515.1,71.6 485.7,142.4 438.3,142.4 467.7,71.6"/><rect x="0" y="0" width="486" height="71.6" fill="url(#armhi)"/><rect x="0" y="71.6" width="486" height="9" fill="url(#armsh)"/><rect x="0" y="70.69999999999999" width="486" height="1.3" fill="#8d8a96" fill-opacity=".8"/><rect x="0" y="137.4" width="486" height="5" fill="url(#armbot)"/><polygon points="40.4,57.2 40.4,113.4 87.3,113.4" transform="translate(1.5,3)" fill="#0f0e15" stroke="#0f0e15" stroke-opacity=".45" fill-opacity=".45" stroke-width="40" stroke-linejoin="round" filter="url(#blur3)"/><polygon points="40.4,57.2 40.4,113.4 87.3,113.4" transform="translate(-.5,-.7)" fill="#5a5866" stroke="#5a5866" stroke-width="38.6" stroke-linejoin="round"/><polygon points="40.4,57.2 40.4,113.4 87.3,113.4" fill="url(#plate)" stroke="url(#plate)" stroke-width="37.6" stroke-linejoin="round"/><g transform="translate(40.4,57.2)"><circle r="10.899999999999999" fill="#1a1922" fill-opacity=".55"/><circle r="9.7" fill="url(#screw)"/><g transform="rotate(-14)"><rect x="-8.899999999999999" y="-1.2" width="17.799999999999997" height="1.7" fill="#8f8c97"/><rect x="-8.899999999999999" y=".5" width="17.799999999999997" height="1.1" fill="#fff" fill-opacity=".6"/></g></g><g transform="translate(40.4,113.6)"><circle r="10.899999999999999" fill="#1a1922" fill-opacity=".55"/><circle r="9.7" fill="url(#screw)"/><g transform="rotate(-4)"><rect x="-8.899999999999999" y="-1.2" width="17.799999999999997" height="1.7" fill="#8f8c97"/><rect x="-8.899999999999999" y=".5" width="17.799999999999997" height="1.1" fill="#fff" fill-opacity=".6"/></g></g><g transform="translate(87.3,113.6)"><circle r="10.899999999999999" fill="#1a1922" fill-opacity=".55"/><circle r="9.7" fill="url(#screw)"/><g transform="rotate(-14)"><rect x="-8.899999999999999" y="-1.2" width="17.799999999999997" height="1.7" fill="#8f8c97"/><rect x="-8.899999999999999" y=".5" width="17.799999999999997" height="1.1" fill="#fff" fill-opacity=".6"/></g></g><circle cx="176.9" cy="195.2" r="176" fill="url(#glow)" fill-opacity="1"/><g stroke="#1a1420" stroke-opacity="0.5" transform="translate(5,9)" filter="url(#blur7)"><circle cx="185.9" cy="185.2" r="123.85" fill="none" stroke-width="18.90"/><path d="M274.2 273.5 L402.0 401.8" fill="none" stroke-width="45.3"/><circle cx="402.0" cy="401.8" r="11.3" fill="none" stroke-width="22.65"/></g><g clip-path="url(#lensclip)"><g transform="translate(162.8,165.0) scale(1.56) translate(-162.8,-165.0)"><rect x="0" y="141.4" width="486" height="344.6" fill="url(#slate-light)"/><rect x="0" y="141.4" width="486" height="344.6" fill="url(#slate-tint)"/><rect x="0" y="142.4" width="486" height="16" fill="url(#under-light)"/><g fill="#24222e"><rect x="24" y="190.3" width="438" height="4.7"/><rect x="169.3" y="192" width="4.7" height="157"/><rect x="314.1" y="192" width="4.7" height="157"/><rect x="24" y="346.4" width="438" height="4.7"/><polygon points="35.6,405.2 450.6,405.2 444.8,409.4 41.4,409.4"/><g fill="#fff" fill-opacity="0.13"><rect x="24" y="191.8" width="438" height="1.6"/><rect x="24" y="347.9" width="438" height="1.6"/></g></g><g font-family="'Liberation Sans',sans-serif" stroke="#24222e" stroke-width=".6" stroke-linejoin="round"><text x="24.3" y="173.1" font-size="20.3" fill="#24222e" textLength="60.0" lengthAdjust="spacingAndGlyphs">PROD.</text><text x="110.5" y="173.1" font-size="20.3" fill="#24222e" textLength="300.2" lengthAdjust="spacingAndGlyphs">SEARCH FOR BLUE DECEMBER</text><text x="97.0" y="216.9" font-size="16.6" fill="#24222e" text-anchor="middle" textLength="39.5" lengthAdjust="spacingAndGlyphs">ROLL</text><text x="243.7" y="216.9" font-size="16.6" fill="#24222e" text-anchor="middle" textLength="53.4" lengthAdjust="spacingAndGlyphs">SCENE</text><text x="391.0" y="216.9" font-size="16.6" fill="#24222e" text-anchor="middle" textLength="38.9" lengthAdjust="spacingAndGlyphs">TAKE</text><text x="26.0" y="381.7" font-size="16.6" fill="#24222e" textLength="80.5" lengthAdjust="spacingAndGlyphs">DIRECTOR</text><text x="135.5" y="384.7" font-size="20.3" fill="#24222e" textLength="99.8" lengthAdjust="spacingAndGlyphs">KAY CELIS</text><text x="66.0" y="436.4" font-size="16.6" fill="#24222e" textLength="40.5" lengthAdjust="spacingAndGlyphs">DATE</text><text x="134.6 154.2 166.6 187.5 199.0 214.3 229.6 244.9" y="442.4" font-size="24.3" fill="#24222e">7.8.2023</text><g transform="translate(97.3,273.2) skewX(-9) translate(-97.3,-273.2)"><text x="76.6" y="309.2" font-size="104" fill="#4a3b57" textLength="41.5" lengthAdjust="spacingAndGlyphs" font-style="italic" stroke="#4a3b57" stroke-width="5.4" stroke-linejoin="round" stroke-linecap="round">3</text></g><g transform="translate(242.9,275.2) skewX(-9) translate(-242.9,-275.2)"><text x="224.2" y="312.3" font-size="107" fill="#4a3b57" textLength="37.5" lengthAdjust="spacingAndGlyphs" font-style="italic" stroke="#4a3b57" stroke-width="5.4" stroke-linejoin="round" stroke-linecap="round">8</text></g><g transform="translate(395.2,276.5) skewX(-9) translate(-395.2,-276.5)"><text x="371.0" y="315.8" font-size="113" fill="#4a3b57" textLength="48.5" lengthAdjust="spacingAndGlyphs" font-style="italic" stroke="#4a3b57" stroke-width="5.4" stroke-linejoin="round" stroke-linecap="round">2</text></g></g><rect x="0" y="0" width="486" height="142.4" fill="#22212c"/><polygon fill="#1e8a6a" points="106.5,0.0 154.3,0.0 183.7,71.6 154.3,142.4 106.5,142.4 135.9,71.6"/><polygon fill="#ebcb70" points="153.9,0.0 201.7,0.0 231.1,71.6 201.7,142.4 153.9,142.4 183.3,71.6"/><polygon fill="#2283e0" points="201.3,0.0 249.1,0.0 278.5,71.6 249.1,142.4 201.3,142.4 230.7,71.6"/><polygon fill="#c01c46" points="248.7,0.0 296.5,0.0 325.9,71.6 296.5,142.4 248.7,142.4 278.1,71.6"/><polygon fill="#e4ddf7" points="296.1,0.0 343.9,0.0 373.3,71.6 343.9,142.4 296.1,142.4 325.5,71.6"/><polygon fill="#95919f" points="343.5,0.0 391.3,0.0 420.7,71.6 391.3,142.4 343.5,142.4 372.9,71.6"/><polygon fill="#55505f" points="390.9,0.0 438.7,0.0 468.1,71.6 438.7,142.4 390.9,142.4 420.3,71.6"/><polygon fill="#3b3845" points="438.3,0.0 485.7,0.0 515.1,71.6 485.7,142.4 438.3,142.4 467.7,71.6"/><rect x="0" y="0" width="486" height="71.6" fill="url(#armhi)"/><rect x="0" y="71.6" width="486" height="9" fill="url(#armsh)"/><rect x="0" y="70.69999999999999" width="486" height="1.3" fill="#8d8a96" fill-opacity=".8"/><rect x="0" y="137.4" width="486" height="5" fill="url(#armbot)"/><polygon points="40.4,57.2 40.4,113.4 87.3,113.4" transform="translate(1.5,3)" fill="#0f0e15" stroke="#0f0e15" stroke-opacity=".45" fill-opacity=".45" stroke-width="40" stroke-linejoin="round" filter="url(#blur3)"/><polygon points="40.4,57.2 40.4,113.4 87.3,113.4" transform="translate(-.5,-.7)" fill="#5a5866" stroke="#5a5866" stroke-width="38.6" stroke-linejoin="round"/><polygon points="40.4,57.2 40.4,113.4 87.3,113.4" fill="url(#plate)" stroke="url(#plate)" stroke-width="37.6" stroke-linejoin="round"/><g transform="translate(40.4,57.2)"><circle r="10.899999999999999" fill="#1a1922" fill-opacity=".55"/><circle r="9.7" fill="url(#screw)"/><g transform="rotate(-14)"><rect x="-8.899999999999999" y="-1.2" width="17.799999999999997" height="1.7" fill="#8f8c97"/><rect x="-8.899999999999999" y=".5" width="17.799999999999997" height="1.1" fill="#fff" fill-opacity=".6"/></g></g><g transform="translate(40.4,113.6)"><circle r="10.899999999999999" fill="#1a1922" fill-opacity=".55"/><circle r="9.7" fill="url(#screw)"/><g transform="rotate(-4)"><rect x="-8.899999999999999" y="-1.2" width="17.799999999999997" height="1.7" fill="#8f8c97"/><rect x="-8.899999999999999" y=".5" width="17.799999999999997" height="1.1" fill="#fff" fill-opacity=".6"/></g></g><g transform="translate(87.3,113.6)"><circle r="10.899999999999999" fill="#1a1922" fill-opacity=".55"/><circle r="9.7" fill="url(#screw)"/><g transform="rotate(-14)"><rect x="-8.899999999999999" y="-1.2" width="17.799999999999997" height="1.7" fill="#8f8c97"/><rect x="-8.899999999999999" y=".5" width="17.799999999999997" height="1.1" fill="#fff" fill-opacity=".6"/></g></g></g><circle cx="185.9" cy="185.2" r="115.7" fill="url(#lensshade-light)"/><path d="M89.4 153.8 A101.5 101.5 0 0 1 151.2 89.8" fill="none" stroke="#fff" stroke-opacity=".3" stroke-width="4.6" stroke-linecap="round"/><path d="M166.1 83.1 A104 104 0 0 1 218.0 86.3" fill="none" stroke="#fff" stroke-opacity=".6" stroke-width="2.2" stroke-linecap="round"/></g><g stroke="#000000"><circle cx="185.9" cy="185.2" r="123.85" fill="none" stroke-width="18.90"/><path d="M274.2 273.5 L402.0 401.8" fill="none" stroke-width="45.3"/><circle cx="402.0" cy="401.8" r="11.3" fill="none" stroke-width="22.65"/></g></g></g>
<g transform="translate(1045.2,215.1)"><rect x="-1" y="0" width="488" height="488.5" fill="#000" fill-opacity=".16" filter="url(#abshadow)"/><g clip-path="url(#abclip)"><rect x="0" y="141.4" width="486" height="344.6" fill="url(#slate-light)"/><rect x="0" y="141.4" width="486" height="344.6" fill="url(#slate-tint)"/><rect x="0" y="142.4" width="486" height="16" fill="url(#under-light)"/><g fill="#24222e"><rect x="24" y="190.3" width="438" height="4.7"/><rect x="169.3" y="192" width="4.7" height="157"/><rect x="314.1" y="192" width="4.7" height="157"/><rect x="24" y="346.4" width="438" height="4.7"/><polygon points="35.6,405.2 450.6,405.2 444.8,409.4 41.4,409.4"/><g fill="#fff" fill-opacity="0.13"><rect x="24" y="191.8" width="438" height="1.6"/><rect x="24" y="347.9" width="438" height="1.6"/></g></g><g font-family="'Liberation Sans',sans-serif" stroke="#24222e" stroke-width=".6" stroke-linejoin="round"><text x="24.3" y="173.1" font-size="20.3" fill="#24222e" textLength="60.0" lengthAdjust="spacingAndGlyphs">PROD.</text><text x="110.5" y="173.1" font-size="20.3" fill="#24222e" textLength="300.2" lengthAdjust="spacingAndGlyphs">SEARCH FOR BLUE DECEMBER</text><text x="97.0" y="216.9" font-size="16.6" fill="#24222e" text-anchor="middle" textLength="39.5" lengthAdjust="spacingAndGlyphs">ROLL</text><text x="243.7" y="216.9" font-size="16.6" fill="#24222e" text-anchor="middle" textLength="53.4" lengthAdjust="spacingAndGlyphs">SCENE</text><text x="391.0" y="216.9" font-size="16.6" fill="#24222e" text-anchor="middle" textLength="38.9" lengthAdjust="spacingAndGlyphs">TAKE</text><text x="26.0" y="381.7" font-size="16.6" fill="#24222e" textLength="80.5" lengthAdjust="spacingAndGlyphs">DIRECTOR</text><text x="135.5" y="384.7" font-size="20.3" fill="#24222e" textLength="99.8" lengthAdjust="spacingAndGlyphs">KAY CELIS</text><text x="66.0" y="436.4" font-size="16.6" fill="#24222e" textLength="40.5" lengthAdjust="spacingAndGlyphs">DATE</text><text x="134.6 154.2 166.6 187.5 199.0 214.3 229.6 244.9" y="442.4" font-size="24.3" fill="#24222e">7.8.2023</text><g transform="translate(97.3,273.2) skewX(-9) translate(-97.3,-273.2)"><text x="76.6" y="309.2" font-size="104" fill="#4a3b57" textLength="41.5" lengthAdjust="spacingAndGlyphs" font-style="italic" stroke="#4a3b57" stroke-width="5.4" stroke-linejoin="round" stroke-linecap="round">3</text></g><g transform="translate(242.9,275.2) skewX(-9) translate(-242.9,-275.2)"><text x="224.2" y="312.3" font-size="107" fill="#4a3b57" textLength="37.5" lengthAdjust="spacingAndGlyphs" font-style="italic" stroke="#4a3b57" stroke-width="5.4" stroke-linejoin="round" stroke-linecap="round">8</text></g><g transform="translate(395.2,276.5) skewX(-9) translate(-395.2,-276.5)"><text x="371.0" y="315.8" font-size="113" fill="#4a3b57" textLength="48.5" lengthAdjust="spacingAndGlyphs" font-style="italic" stroke="#4a3b57" stroke-width="5.4" stroke-linejoin="round" stroke-linecap="round">2</text></g></g><rect x="0" y="0" width="486" height="142.4" fill="#22212c"/><polygon fill="#1e8a6a" points="106.5,0.0 154.3,0.0 183.7,71.6 154.3,142.4 106.5,142.4 135.9,71.6"/><polygon fill="#ebcb70" points="153.9,0.0 201.7,0.0 231.1,71.6 201.7,142.4 153.9,142.4 183.3,71.6"/><polygon fill="#2283e0" points="201.3,0.0 249.1,0.0 278.5,71.6 249.1,142.4 201.3,142.4 230.7,71.6"/><polygon fill="#c01c46" points="248.7,0.0 296.5,0.0 325.9,71.6 296.5,142.4 248.7,142.4 278.1,71.6"/><polygon fill="#e4ddf7" points="296.1,0.0 343.9,0.0 373.3,71.6 343.9,142.4 296.1,142.4 325.5,71.6"/><polygon fill="#95919f" points="343.5,0.0 391.3,0.0 420.7,71.6 391.3,142.4 343.5,142.4 372.9,71.6"/><polygon fill="#55505f" points="390.9,0.0 438.7,0.0 468.1,71.6 438.7,142.4 390.9,142.4 420.3,71.6"/><polygon fill="#3b3845" points="438.3,0.0 485.7,0.0 515.1,71.6 485.7,142.4 438.3,142.4 467.7,71.6"/><rect x="0" y="0" width="486" height="71.6" fill="url(#armhi)"/><rect x="0" y="71.6" width="486" height="9" fill="url(#armsh)"/><rect x="0" y="70.69999999999999" width="486" height="1.3" fill="#8d8a96" fill-opacity=".8"/><rect x="0" y="137.4" width="486" height="5" fill="url(#armbot)"/><polygon points="40.4,57.2 40.4,113.4 87.3,113.4" transform="translate(1.5,3)" fill="#0f0e15" stroke="#0f0e15" stroke-opacity=".45" fill-opacity=".45" stroke-width="40" stroke-linejoin="round" filter="url(#blur3)"/><polygon points="40.4,57.2 40.4,113.4 87.3,113.4" transform="translate(-.5,-.7)" fill="#5a5866" stroke="#5a5866" stroke-width="38.6" stroke-linejoin="round"/><polygon points="40.4,57.2 40.4,113.4 87.3,113.4" fill="url(#plate)" stroke="url(#plate)" stroke-width="37.6" stroke-linejoin="round"/><g transform="translate(40.4,57.2)"><circle r="10.899999999999999" fill="#1a1922" fill-opacity=".55"/><circle r="9.7" fill="url(#screw)"/><g transform="rotate(-14)"><rect x="-8.899999999999999" y="-1.2" width="17.799999999999997" height="1.7" fill="#8f8c97"/><rect x="-8.899999999999999" y=".5" width="17.799999999999997" height="1.1" fill="#fff" fill-opacity=".6"/></g></g><g transform="translate(40.4,113.6)"><circle r="10.899999999999999" fill="#1a1922" fill-opacity=".55"/><circle r="9.7" fill="url(#screw)"/><g transform="rotate(-4)"><rect x="-8.899999999999999" y="-1.2" width="17.799999999999997" height="1.7" fill="#8f8c97"/><rect x="-8.899999999999999" y=".5" width="17.799999999999997" height="1.1" fill="#fff" fill-opacity=".6"/></g></g><g transform="translate(87.3,113.6)"><circle r="10.899999999999999" fill="#1a1922" fill-opacity=".55"/><circle r="9.7" fill="url(#screw)"/><g transform="rotate(-14)"><rect x="-8.899999999999999" y="-1.2" width="17.799999999999997" height="1.7" fill="#8f8c97"/><rect x="-8.899999999999999" y=".5" width="17.799999999999997" height="1.1" fill="#fff" fill-opacity=".6"/></g></g></g></g>
<g transform="translate(512.2,748.2)"><rect x="-1" y="0" width="488" height="488.5" fill="#000" fill-opacity=".16" filter="url(#abshadow)"/><g clip-path="url(#abclip)"><rect x="0" y="141.4" width="486" height="344.6" fill="url(#slate-dark)"/><rect x="0" y="142.4" width="486" height="9" fill="url(#under-dark)"/><g fill="#dcd7e3"><rect x="24" y="190.3" width="438" height="4.7"/><rect x="169.3" y="192" width="4.7" height="157"/><rect x="314.1" y="192" width="4.7" height="157"/><rect x="24" y="346.4" width="438" height="4.7"/><polygon points="35.6,405.2 450.6,405.2 444.8,409.4 41.4,409.4"/><g fill="#000" fill-opacity="0.1"><rect x="24" y="191.8" width="438" height="1.6"/><rect x="24" y="347.9" width="438" height="1.6"/></g></g><g font-family="'Liberation Sans',sans-serif" stroke="#dcd7e3" stroke-width=".6" stroke-linejoin="round"><text x="24.3" y="173.1" font-size="20.3" fill="#dcd7e3" textLength="60.0" lengthAdjust="spacingAndGlyphs">PROD.</text><text x="110.5" y="173.1" font-size="20.3" fill="#dcd7e3" textLength="300.2" lengthAdjust="spacingAndGlyphs">SEARCH FOR BLUE DECEMBER</text><text x="97.0" y="216.9" font-size="16.6" fill="#dcd7e3" text-anchor="middle" textLength="39.5" lengthAdjust="spacingAndGlyphs">ROLL</text><text x="243.7" y="216.9" font-size="16.6" fill="#dcd7e3" text-anchor="middle" textLength="53.4" lengthAdjust="spacingAndGlyphs">SCENE</text><text x="391.0" y="216.9" font-size="16.6" fill="#dcd7e3" text-anchor="middle" textLength="38.9" lengthAdjust="spacingAndGlyphs">TAKE</text><text x="26.0" y="381.7" font-size="16.6" fill="#dcd7e3" textLength="80.5" lengthAdjust="spacingAndGlyphs">DIRECTOR</text><text x="135.5" y="384.7" font-size="20.3" fill="#dcd7e3" textLength="99.8" lengthAdjust="spacingAndGlyphs">KAY CELIS</text><text x="66.0" y="436.4" font-size="16.6" fill="#dcd7e3" textLength="40.5" lengthAdjust="spacingAndGlyphs">DATE</text><text x="134.6 154.2 166.6 187.5 199.0 214.3 229.6 244.9" y="442.4" font-size="24.3" fill="#dcd7e3">7.8.2023</text><g transform="translate(97.3,273.2) skewX(-9) translate(-97.3,-273.2)"><text x="76.6" y="309.2" font-size="104" fill="#e7e1ee" textLength="41.5" lengthAdjust="spacingAndGlyphs" font-style="italic" stroke="#e7e1ee" stroke-width="5.4" stroke-linejoin="round" stroke-linecap="round">3</text></g><g transform="translate(242.9,275.2) skewX(-9) translate(-242.9,-275.2)"><text x="224.2" y="312.3" font-size="107" fill="#e7e1ee" textLength="37.5" lengthAdjust="spacingAndGlyphs" font-style="italic" stroke="#e7e1ee" stroke-width="5.4" stroke-linejoin="round" stroke-linecap="round">8</text></g><g transform="translate(395.2,276.5) skewX(-9) translate(-395.2,-276.5)"><text x="371.0" y="315.8" font-size="113" fill="#e7e1ee" textLength="48.5" lengthAdjust="spacingAndGlyphs" font-style="italic" stroke="#e7e1ee" stroke-width="5.4" stroke-linejoin="round" stroke-linecap="round">2</text></g></g><rect x="0" y="0" width="486" height="142.4" fill="#22212c"/><polygon fill="#e4ddf7" points="106.5,0.0 154.3,0.0 183.7,71.6 154.3,142.4 106.5,142.4 135.9,71.6"/><polygon fill="#e4ddf7" points="201.3,0.0 249.1,0.0 278.5,71.6 249.1,142.4 201.3,142.4 230.7,71.6"/><polygon fill="#e4ddf7" points="296.1,0.0 343.9,0.0 373.3,71.6 343.9,142.4 296.1,142.4 325.5,71.6"/><polygon fill="#e4ddf7" points="390.9,0.0 438.7,0.0 468.1,71.6 438.7,142.4 390.9,142.4 420.3,71.6"/><rect x="0" y="0" width="486" height="71.6" fill="url(#armhi)"/><rect x="0" y="71.6" width="486" height="9" fill="url(#armsh)"/><rect x="0" y="70.69999999999999" width="486" height="1.3" fill="#8d8a96" fill-opacity=".8"/><rect x="0" y="137.4" width="486" height="5" fill="url(#armbot)"/><polygon points="40.4,57.2 40.4,113.4 87.3,113.4" transform="translate(1.5,3)" fill="#0f0e15" stroke="#0f0e15" stroke-opacity=".45" fill-opacity=".45" stroke-width="40" stroke-linejoin="round" filter="url(#blur3)"/><polygon points="40.4,57.2 40.4,113.4 87.3,113.4" transform="translate(-.5,-.7)" fill="#5a5866" stroke="#5a5866" stroke-width="38.6" stroke-linejoin="round"/><polygon points="40.4,57.2 40.4,113.4 87.3,113.4" fill="url(#plate)" stroke="url(#plate)" stroke-width="37.6" stroke-linejoin="round"/><g transform="translate(40.4,57.2)"><circle r="10.899999999999999" fill="#1a1922" fill-opacity=".55"/><circle r="9.7" fill="url(#screw)"/><g transform="rotate(-14)"><rect x="-8.899999999999999" y="-1.2" width="17.799999999999997" height="1.7" fill="#8f8c97"/><rect x="-8.899999999999999" y=".5" width="17.799999999999997" height="1.1" fill="#fff" fill-opacity=".6"/></g></g><g transform="translate(40.4,113.6)"><circle r="10.899999999999999" fill="#1a1922" fill-opacity=".55"/><circle r="9.7" fill="url(#screw)"/><g transform="rotate(-4)"><rect x="-8.899999999999999" y="-1.2" width="17.799999999999997" height="1.7" fill="#8f8c97"/><rect x="-8.899999999999999" y=".5" width="17.799999999999997" height="1.1" fill="#fff" fill-opacity=".6"/></g></g><g transform="translate(87.3,113.6)"><circle r="10.899999999999999" fill="#1a1922" fill-opacity=".55"/><circle r="9.7" fill="url(#screw)"/><g transform="rotate(-14)"><rect x="-8.899999999999999" y="-1.2" width="17.799999999999997" height="1.7" fill="#8f8c97"/><rect x="-8.899999999999999" y=".5" width="17.799999999999997" height="1.1" fill="#fff" fill-opacity=".6"/></g></g><circle cx="176.9" cy="195.2" r="176" fill="url(#glow)" fill-opacity="0.4"/><g stroke="#1a1420" stroke-opacity="0.55" transform="translate(5,9)" filter="url(#blur7)"><circle cx="185.9" cy="185.2" r="123.85" fill="none" stroke-width="18.90"/><path d="M274.2 273.5 L402.0 401.8" fill="none" stroke-width="45.3"/><circle cx="402.0" cy="401.8" r="11.3" fill="none" stroke-width="22.65"/></g><g clip-path="url(#lensclip)"><g transform="translate(162.8,165.0) scale(1.56) translate(-162.8,-165.0)"><rect x="0" y="141.4" width="486" height="344.6" fill="url(#slate-dark)"/><rect x="0" y="142.4" width="486" height="9" fill="url(#under-dark)"/><g fill="#dcd7e3"><rect x="24" y="190.3" width="438" height="4.7"/><rect x="169.3" y="192" width="4.7" height="157"/><rect x="314.1" y="192" width="4.7" height="157"/><rect x="24" y="346.4" width="438" height="4.7"/><polygon points="35.6,405.2 450.6,405.2 444.8,409.4 41.4,409.4"/><g fill="#000" fill-opacity="0.1"><rect x="24" y="191.8" width="438" height="1.6"/><rect x="24" y="347.9" width="438" height="1.6"/></g></g><g font-family="'Liberation Sans',sans-serif" stroke="#dcd7e3" stroke-width=".6" stroke-linejoin="round"><text x="24.3" y="175.3" font-size="20.3" fill="#dcd7e3" textLength="60.0" lengthAdjust="spacingAndGlyphs">PROD.</text><text x="110.5" y="175.3" font-size="20.3" fill="#dcd7e3" textLength="300.2" lengthAdjust="spacingAndGlyphs">SEARCH FOR BLUE DECEMBER</text><text x="97.0" y="216.9" font-size="16.6" fill="#dcd7e3" text-anchor="middle" textLength="39.5" lengthAdjust="spacingAndGlyphs">ROLL</text><text x="243.7" y="216.9" font-size="16.6" fill="#dcd7e3" text-anchor="middle" textLength="53.4" lengthAdjust="spacingAndGlyphs">SCENE</text><text x="391.0" y="216.9" font-size="16.6" fill="#dcd7e3" text-anchor="middle" textLength="38.9" lengthAdjust="spacingAndGlyphs">TAKE</text><text x="26.0" y="381.7" font-size="16.6" fill="#dcd7e3" textLength="80.5" lengthAdjust="spacingAndGlyphs">DIRECTOR</text><text x="135.5" y="384.7" font-size="20.3" fill="#dcd7e3" textLength="99.8" lengthAdjust="spacingAndGlyphs">KAY CELIS</text><text x="66.0" y="436.4" font-size="16.6" fill="#dcd7e3" textLength="40.5" lengthAdjust="spacingAndGlyphs">DATE</text><text x="134.6 154.2 166.6 187.5 199.0 214.3 229.6 244.9" y="442.4" font-size="24.3" fill="#dcd7e3">7.8.2023</text><g transform="translate(97.3,273.2) skewX(-9) translate(-97.3,-273.2)"><text x="76.6" y="309.2" font-size="104" fill="#e7e1ee" textLength="41.5" lengthAdjust="spacingAndGlyphs" font-style="italic" stroke="#e7e1ee" stroke-width="5.4" stroke-linejoin="round" stroke-linecap="round">3</text></g><g transform="translate(242.9,275.2) skewX(-9) translate(-242.9,-275.2)"><text x="224.2" y="312.3" font-size="107" fill="#e7e1ee" textLength="37.5" lengthAdjust="spacingAndGlyphs" font-style="italic" stroke="#e7e1ee" stroke-width="5.4" stroke-linejoin="round" stroke-linecap="round">8</text></g><g transform="translate(395.2,276.5) skewX(-9) translate(-395.2,-276.5)"><text x="371.0" y="315.8" font-size="113" fill="#e7e1ee" textLength="48.5" lengthAdjust="spacingAndGlyphs" font-style="italic" stroke="#e7e1ee" stroke-width="5.4" stroke-linejoin="round" stroke-linecap="round">2</text></g></g><rect x="0" y="0" width="486" height="142.4" fill="#22212c"/><polygon fill="#e4ddf7" points="106.5,0.0 154.3,0.0 183.7,71.6 154.3,142.4 106.5,142.4 135.9,71.6"/><polygon fill="#e4ddf7" points="201.3,0.0 249.1,0.0 278.5,71.6 249.1,142.4 201.3,142.4 230.7,71.6"/><polygon fill="#e4ddf7" points="296.1,0.0 343.9,0.0 373.3,71.6 343.9,142.4 296.1,142.4 325.5,71.6"/><polygon fill="#e4ddf7" points="390.9,0.0 438.7,0.0 468.1,71.6 438.7,142.4 390.9,142.4 420.3,71.6"/><rect x="0" y="0" width="486" height="71.6" fill="url(#armhi)"/><rect x="0" y="71.6" width="486" height="9" fill="url(#armsh)"/><rect x="0" y="70.69999999999999" width="486" height="1.3" fill="#8d8a96" fill-opacity=".8"/><rect x="0" y="137.4" width="486" height="5" fill="url(#armbot)"/><polygon points="40.4,57.2 40.4,113.4 87.3,113.4" transform="translate(1.5,3)" fill="#0f0e15" stroke="#0f0e15" stroke-opacity=".45" fill-opacity=".45" stroke-width="40" stroke-linejoin="round" filter="url(#blur3)"/><polygon points="40.4,57.2 40.4,113.4 87.3,113.4" transform="translate(-.5,-.7)" fill="#5a5866" stroke="#5a5866" stroke-width="38.6" stroke-linejoin="round"/><polygon points="40.4,57.2 40.4,113.4 87.3,113.4" fill="url(#plate)" stroke="url(#plate)" stroke-width="37.6" stroke-linejoin="round"/><g transform="translate(40.4,57.2)"><circle r="10.899999999999999" fill="#1a1922" fill-opacity=".55"/><circle r="9.7" fill="url(#screw)"/><g transform="rotate(-14)"><rect x="-8.899999999999999" y="-1.2" width="17.799999999999997" height="1.7" fill="#8f8c97"/><rect x="-8.899999999999999" y=".5" width="17.799999999999997" height="1.1" fill="#fff" fill-opacity=".6"/></g></g><g transform="translate(40.4,113.6)"><circle r="10.899999999999999" fill="#1a1922" fill-opacity=".55"/><circle r="9.7" fill="url(#screw)"/><g transform="rotate(-4)"><rect x="-8.899999999999999" y="-1.2" width="17.799999999999997" height="1.7" fill="#8f8c97"/><rect x="-8.899999999999999" y=".5" width="17.799999999999997" height="1.1" fill="#fff" fill-opacity=".6"/></g></g><g transform="translate(87.3,113.6)"><circle r="10.899999999999999" fill="#1a1922" fill-opacity=".55"/><circle r="9.7" fill="url(#screw)"/><g transform="rotate(-14)"><rect x="-8.899999999999999" y="-1.2" width="17.799999999999997" height="1.7" fill="#8f8c97"/><rect x="-8.899999999999999" y=".5" width="17.799999999999997" height="1.1" fill="#fff" fill-opacity=".6"/></g></g></g><circle cx="185.9" cy="185.2" r="115.7" fill="url(#lensshade-dark)"/><path d="M89.4 153.8 A101.5 101.5 0 0 1 151.2 89.8" fill="none" stroke="#fff" stroke-opacity=".3" stroke-width="4.6" stroke-linecap="round"/><path d="M166.1 83.1 A104 104 0 0 1 218.0 86.3" fill="none" stroke="#fff" stroke-opacity=".6" stroke-width="2.2" stroke-linecap="round"/></g><g stroke="#ffffff"><circle cx="185.9" cy="185.2" r="123.85" fill="none" stroke-width="18.90"/><path d="M274.2 273.5 L402.0 401.8" fill="none" stroke-width="45.3"/><circle cx="402.0" cy="401.8" r="11.3" fill="none" stroke-width="22.65"/></g></g></g>
<g transform="translate(1045.2,748.2)"><rect x="-1" y="0" width="488" height="488.5" fill="#000" fill-opacity=".16" filter="url(#abshadow)"/><g clip-path="url(#abclip)"><rect x="0" y="141.4" width="486" height="344.6" fill="url(#slate-dark)"/><rect x="0" y="142.4" width="486" height="9" fill="url(#under-dark)"/><g fill="#dcd7e3"><rect x="24" y="190.3" width="438" height="4.7"/><rect x="169.3" y="192" width="4.7" height="157"/><rect x="314.1" y="192" width="4.7" height="157"/><rect x="24" y="346.4" width="438" height="4.7"/><polygon points="35.6,405.2 450.6,405.2 444.8,409.4 41.4,409.4"/><g fill="#000" fill-opacity="0.1"><rect x="24" y="191.8" width="438" height="1.6"/><rect x="24" y="347.9" width="438" height="1.6"/></g></g><g font-family="'Liberation Sans',sans-serif" stroke="#dcd7e3" stroke-width=".6" stroke-linejoin="round"><text x="24.3" y="173.1" font-size="20.3" fill="#dcd7e3" textLength="60.0" lengthAdjust="spacingAndGlyphs">PROD.</text><text x="110.5" y="173.1" font-size="20.3" fill="#dcd7e3" textLength="300.2" lengthAdjust="spacingAndGlyphs">SEARCH FOR BLUE DECEMBER</text><text x="97.0" y="216.9" font-size="16.6" fill="#dcd7e3" text-anchor="middle" textLength="39.5" lengthAdjust="spacingAndGlyphs">ROLL</text><text x="243.7" y="216.9" font-size="16.6" fill="#dcd7e3" text-anchor="middle" textLength="53.4" lengthAdjust="spacingAndGlyphs">SCENE</text><text x="391.0" y="216.9" font-size="16.6" fill="#dcd7e3" text-anchor="middle" textLength="38.9" lengthAdjust="spacingAndGlyphs">TAKE</text><text x="26.0" y="381.7" font-size="16.6" fill="#dcd7e3" textLength="80.5" lengthAdjust="spacingAndGlyphs">DIRECTOR</text><text x="135.5" y="384.7" font-size="20.3" fill="#dcd7e3" textLength="99.8" lengthAdjust="spacingAndGlyphs">KAY CELIS</text><text x="66.0" y="436.4" font-size="16.6" fill="#dcd7e3" textLength="40.5" lengthAdjust="spacingAndGlyphs">DATE</text><text x="134.6 154.2 166.6 187.5 199.0 214.3 229.6 244.9" y="442.4" font-size="24.3" fill="#dcd7e3">7.8.2023</text><g transform="translate(97.3,273.2) skewX(-9) translate(-97.3,-273.2)"><text x="76.6" y="309.2" font-size="104" fill="#e7e1ee" textLength="41.5" lengthAdjust="spacingAndGlyphs" font-style="italic" stroke="#e7e1ee" stroke-width="5.4" stroke-linejoin="round" stroke-linecap="round">3</text></g><g transform="translate(242.9,275.2) skewX(-9) translate(-242.9,-275.2)"><text x="224.2" y="312.3" font-size="107" fill="#e7e1ee" textLength="37.5" lengthAdjust="spacingAndGlyphs" font-style="italic" stroke="#e7e1ee" stroke-width="5.4" stroke-linejoin="round" stroke-linecap="round">8</text></g><g transform="translate(395.2,276.5) skewX(-9) translate(-395.2,-276.5)"><text x="371.0" y="315.8" font-size="113" fill="#e7e1ee" textLength="48.5" lengthAdjust="spacingAndGlyphs" font-style="italic" stroke="#e7e1ee" stroke-width="5.4" stroke-linejoin="round" stroke-linecap="round">2</text></g></g><rect x="0" y="0" width="486" height="142.4" fill="#22212c"/><polygon fill="#e4ddf7" points="106.5,0.0 154.3,0.0 183.7,71.6 154.3,142.4 106.5,142.4 135.9,71.6"/><polygon fill="#e4ddf7" points="201.3,0.0 249.1,0.0 278.5,71.6 249.1,142.4 201.3,142.4 230.7,71.6"/><polygon fill="#e4ddf7" points="296.1,0.0 343.9,0.0 373.3,71.6 343.9,142.4 296.1,142.4 325.5,71.6"/><polygon fill="#e4ddf7" points="390.9,0.0 438.7,0.0 468.1,71.6 438.7,142.4 390.9,142.4 420.3,71.6"/><rect x="0" y="0" width="486" height="71.6" fill="url(#armhi)"/><rect x="0" y="71.6" width="486" height="9" fill="url(#armsh)"/><rect x="0" y="70.69999999999999" width="486" height="1.3" fill="#8d8a96" fill-opacity=".8"/><rect x="0" y="137.4" width="486" height="5" fill="url(#armbot)"/><polygon points="40.4,57.2 40.4,113.4 87.3,113.4" transform="translate(1.5,3)" fill="#0f0e15" stroke="#0f0e15" stroke-opacity=".45" fill-opacity=".45" stroke-width="40" stroke-linejoin="round" filter="url(#blur3)"/><polygon points="40.4,57.2 40.4,113.4 87.3,113.4" transform="translate(-.5,-.7)" fill="#5a5866" stroke="#5a5866" stroke-width="38.6" stroke-linejoin="round"/><polygon points="40.4,57.2 40.4,113.4 87.3,113.4" fill="url(#plate)" stroke="url(#plate)" stroke-width="37.6" stroke-linejoin="round"/><g transform="translate(40.4,57.2)"><circle r="10.899999999999999" fill="#1a1922" fill-opacity=".55"/><circle r="9.7" fill="url(#screw)"/><g transform="rotate(-14)"><rect x="-8.899999999999999" y="-1.2" width="17.799999999999997" height="1.7" fill="#8f8c97"/><rect x="-8.899999999999999" y=".5" width="17.799999999999997" height="1.1" fill="#fff" fill-opacity=".6"/></g></g><g transform="translate(40.4,113.6)"><circle r="10.899999999999999" fill="#1a1922" fill-opacity=".55"/><circle r="9.7" fill="url(#screw)"/><g transform="rotate(-4)"><rect x="-8.899999999999999" y="-1.2" width="17.799999999999997" height="1.7" fill="#8f8c97"/><rect x="-8.899999999999999" y=".5" width="17.799999999999997" height="1.1" fill="#fff" fill-opacity=".6"/></g></g><g transform="translate(87.3,113.6)"><circle r="10.899999999999999" fill="#1a1922" fill-opacity=".55"/><circle r="9.7" fill="url(#screw)"/><g transform="rotate(-14)"><rect x="-8.899999999999999" y="-1.2" width="17.799999999999997" height="1.7" fill="#8f8c97"/><rect x="-8.899999999999999" y=".5" width="17.799999999999997" height="1.1" fill="#fff" fill-opacity=".6"/></g></g></g></g>
<rect x="583.8" y="286.6" width="229.3" height="229.6" fill="none" stroke="#c8702e" stroke-width=".9"/>
<rect x="580.6" y="283.4" width="6.4" height="6.4" fill="#fff" stroke="#9a9a9a" stroke-width=".7"/>
<rect x="580.6" y="513.0" width="6.4" height="6.4" fill="#fff" stroke="#9a9a9a" stroke-width=".7"/>
<rect x="809.9" y="283.4" width="6.4" height="6.4" fill="#fff" stroke="#9a9a9a" stroke-width=".7"/>
<rect x="809.9" y="513.0" width="6.4" height="6.4" fill="#fff" stroke="#9a9a9a" stroke-width=".7"/>
<rect x="1177.6" y="857.7" width="149" height="107.3" rx="7" fill="#000" fill-opacity=".3" filter="url(#blur3)"/>
<rect x="1177.6" y="855.7" width="149" height="107.3" rx="7" fill="url(#mmbg)"/>
<g transform="translate(1224,877.4) scale(0.07366)"><g clip-path="url(#abclip)"><rect x="0" y="141.4" width="486" height="344.6" fill="url(#slate-light)"/><rect x="0" y="141.4" width="486" height="344.6" fill="url(#slate-tint)"/><rect x="0" y="142.4" width="486" height="16" fill="url(#under-light)"/><g fill="#24222e"><rect x="24" y="190.3" width="438" height="4.7"/><rect x="169.3" y="192" width="4.7" height="157"/><rect x="314.1" y="192" width="4.7" height="157"/><rect x="24" y="346.4" width="438" height="4.7"/><polygon points="35.6,405.2 450.6,405.2 444.8,409.4 41.4,409.4"/></g><g fill="#4a3b57"><rect x="80" y="236" width="36" height="74" rx="10"/><rect x="226" y="236" width="36" height="76" rx="10"/><rect x="372" y="236" width="40" height="76" rx="10"/></g><g fill="#24222e"><rect x="24" y="158" width="60" height="16"/><rect x="110" y="158" width="300" height="16"/><rect x="26" y="370" width="80" height="13"/><rect x="135" y="370" width="100" height="16"/><rect x="66" y="425" width="40" height="13"/><rect x="135" y="425" width="122" height="18"/></g><rect x="0" y="0" width="486" height="142.4" fill="#22212c"/><polygon fill="#1e8a6a" points="106.5,0.0 154.3,0.0 183.7,71.6 154.3,142.4 106.5,142.4 135.9,71.6"/><polygon fill="#ebcb70" points="153.9,0.0 201.7,0.0 231.1,71.6 201.7,142.4 153.9,142.4 183.3,71.6"/><polygon fill="#2283e0" points="201.3,0.0 249.1,0.0 278.5,71.6 249.1,142.4 201.3,142.4 230.7,71.6"/><polygon fill="#c01c46" points="248.7,0.0 296.5,0.0 325.9,71.6 296.5,142.4 248.7,142.4 278.1,71.6"/><polygon fill="#e4ddf7" points="296.1,0.0 343.9,0.0 373.3,71.6 343.9,142.4 296.1,142.4 325.5,71.6"/><polygon fill="#95919f" points="343.5,0.0 391.3,0.0 420.7,71.6 391.3,142.4 343.5,142.4 372.9,71.6"/><polygon fill="#55505f" points="390.9,0.0 438.7,0.0 468.1,71.6 438.7,142.4 390.9,142.4 420.3,71.6"/><polygon fill="#3b3845" points="438.3,0.0 485.7,0.0 515.1,71.6 485.7,142.4 438.3,142.4 467.7,71.6"/><rect x="0" y="0" width="486" height="71.6" fill="url(#armhi)"/><rect x="0" y="71.6" width="486" height="9" fill="url(#armsh)"/><rect x="0" y="70.69999999999999" width="486" height="1.3" fill="#8d8a96" fill-opacity=".8"/><rect x="0" y="137.4" width="486" height="5" fill="url(#armbot)"/><polygon points="40.4,57.2 40.4,113.4 87.3,113.4" transform="translate(-.5,-.7)" fill="#5a5866" stroke="#5a5866" stroke-width="38.6" stroke-linejoin="round"/><polygon points="40.4,57.2 40.4,113.4 87.3,113.4" fill="url(#plate)" stroke="url(#plate)" stroke-width="37.6" stroke-linejoin="round"/><circle cx="40.4" cy="57.2" r="9.7" fill="#d5d2d9"/><circle cx="40.4" cy="113.6" r="9.7" fill="#d5d2d9"/><circle cx="87.3" cy="113.6" r="9.7" fill="#d5d2d9"/><circle cx="185.9" cy="185.2" r="114.7" fill="#f1ebf4" fill-opacity=".8"/><g stroke="#000000"><circle cx="185.9" cy="185.2" r="123.85" fill="none" stroke-width="18.90"/><path d="M274.2 273.5 L402.0 401.8" fill="none" stroke-width="45.3"/><circle cx="402.0" cy="401.8" r="11.3" fill="none" stroke-width="22.65"/></g></g></g>
<g transform="translate(1263.4,877.4) scale(0.07366)"><g clip-path="url(#abclip)"><rect x="0" y="141.4" width="486" height="344.6" fill="url(#slate-light)"/><rect x="0" y="141.4" width="486" height="344.6" fill="url(#slate-tint)"/><rect x="0" y="142.4" width="486" height="16" fill="url(#under-light)"/><g fill="#24222e"><rect x="24" y="190.3" width="438" height="4.7"/><rect x="169.3" y="192" width="4.7" height="157"/><rect x="314.1" y="192" width="4.7" height="157"/><rect x="24" y="346.4" width="438" height="4.7"/><polygon points="35.6,405.2 450.6,405.2 444.8,409.4 41.4,409.4"/></g><g fill="#4a3b57"><rect x="80" y="236" width="36" height="74" rx="10"/><rect x="226" y="236" width="36" height="76" rx="10"/><rect x="372" y="236" width="40" height="76" rx="10"/></g><g fill="#24222e"><rect x="24" y="158" width="60" height="16"/><rect x="110" y="158" width="300" height="16"/><rect x="26" y="370" width="80" height="13"/><rect x="135" y="370" width="100" height="16"/><rect x="66" y="425" width="40" height="13"/><rect x="135" y="425" width="122" height="18"/></g><rect x="0" y="0" width="486" height="142.4" fill="#22212c"/><polygon fill="#1e8a6a" points="106.5,0.0 154.3,0.0 183.7,71.6 154.3,142.4 106.5,142.4 135.9,71.6"/><polygon fill="#ebcb70" points="153.9,0.0 201.7,0.0 231.1,71.6 201.7,142.4 153.9,142.4 183.3,71.6"/><polygon fill="#2283e0" points="201.3,0.0 249.1,0.0 278.5,71.6 249.1,142.4 201.3,142.4 230.7,71.6"/><polygon fill="#c01c46" points="248.7,0.0 296.5,0.0 325.9,71.6 296.5,142.4 248.7,142.4 278.1,71.6"/><polygon fill="#e4ddf7" points="296.1,0.0 343.9,0.0 373.3,71.6 343.9,142.4 296.1,142.4 325.5,71.6"/><polygon fill="#95919f" points="343.5,0.0 391.3,0.0 420.7,71.6 391.3,142.4 343.5,142.4 372.9,71.6"/><polygon fill="#55505f" points="390.9,0.0 438.7,0.0 468.1,71.6 438.7,142.4 390.9,142.4 420.3,71.6"/><polygon fill="#3b3845" points="438.3,0.0 485.7,0.0 515.1,71.6 485.7,142.4 438.3,142.4 467.7,71.6"/><rect x="0" y="0" width="486" height="71.6" fill="url(#armhi)"/><rect x="0" y="71.6" width="486" height="9" fill="url(#armsh)"/><rect x="0" y="70.69999999999999" width="486" height="1.3" fill="#8d8a96" fill-opacity=".8"/><rect x="0" y="137.4" width="486" height="5" fill="url(#armbot)"/><polygon points="40.4,57.2 40.4,113.4 87.3,113.4" transform="translate(-.5,-.7)" fill="#5a5866" stroke="#5a5866" stroke-width="38.6" stroke-linejoin="round"/><polygon points="40.4,57.2 40.4,113.4 87.3,113.4" fill="url(#plate)" stroke="url(#plate)" stroke-width="37.6" stroke-linejoin="round"/><circle cx="40.4" cy="57.2" r="9.7" fill="#d5d2d9"/><circle cx="40.4" cy="113.6" r="9.7" fill="#d5d2d9"/><circle cx="87.3" cy="113.6" r="9.7" fill="#d5d2d9"/></g></g>
<g transform="translate(1224,916.6) scale(0.07366)"><g clip-path="url(#abclip)"><rect x="0" y="141.4" width="486" height="344.6" fill="url(#slate-dark)"/><rect x="0" y="142.4" width="486" height="9" fill="url(#under-dark)"/><g fill="#dcd7e3"><rect x="24" y="190.3" width="438" height="4.7"/><rect x="169.3" y="192" width="4.7" height="157"/><rect x="314.1" y="192" width="4.7" height="157"/><rect x="24" y="346.4" width="438" height="4.7"/><polygon points="35.6,405.2 450.6,405.2 444.8,409.4 41.4,409.4"/></g><g fill="#e7e1ee"><rect x="80" y="236" width="36" height="74" rx="10"/><rect x="226" y="236" width="36" height="76" rx="10"/><rect x="372" y="236" width="40" height="76" rx="10"/></g><g fill="#dcd7e3"><rect x="24" y="158" width="60" height="16"/><rect x="110" y="158" width="300" height="16"/><rect x="26" y="370" width="80" height="13"/><rect x="135" y="370" width="100" height="16"/><rect x="66" y="425" width="40" height="13"/><rect x="135" y="425" width="122" height="18"/></g><rect x="0" y="0" width="486" height="142.4" fill="#22212c"/><polygon fill="#e4ddf7" points="106.5,0.0 154.3,0.0 183.7,71.6 154.3,142.4 106.5,142.4 135.9,71.6"/><polygon fill="#e4ddf7" points="201.3,0.0 249.1,0.0 278.5,71.6 249.1,142.4 201.3,142.4 230.7,71.6"/><polygon fill="#e4ddf7" points="296.1,0.0 343.9,0.0 373.3,71.6 343.9,142.4 296.1,142.4 325.5,71.6"/><polygon fill="#e4ddf7" points="390.9,0.0 438.7,0.0 468.1,71.6 438.7,142.4 390.9,142.4 420.3,71.6"/><rect x="0" y="0" width="486" height="71.6" fill="url(#armhi)"/><rect x="0" y="71.6" width="486" height="9" fill="url(#armsh)"/><rect x="0" y="70.69999999999999" width="486" height="1.3" fill="#8d8a96" fill-opacity=".8"/><rect x="0" y="137.4" width="486" height="5" fill="url(#armbot)"/><polygon points="40.4,57.2 40.4,113.4 87.3,113.4" transform="translate(-.5,-.7)" fill="#5a5866" stroke="#5a5866" stroke-width="38.6" stroke-linejoin="round"/><polygon points="40.4,57.2 40.4,113.4 87.3,113.4" fill="url(#plate)" stroke="url(#plate)" stroke-width="37.6" stroke-linejoin="round"/><circle cx="40.4" cy="57.2" r="9.7" fill="#d5d2d9"/><circle cx="40.4" cy="113.6" r="9.7" fill="#d5d2d9"/><circle cx="87.3" cy="113.6" r="9.7" fill="#d5d2d9"/><circle cx="185.9" cy="185.2" r="114.7" fill="#2a2934" fill-opacity=".8"/><g stroke="#ffffff"><circle cx="185.9" cy="185.2" r="123.85" fill="none" stroke-width="18.90"/><path d="M274.2 273.5 L402.0 401.8" fill="none" stroke-width="45.3"/><circle cx="402.0" cy="401.8" r="11.3" fill="none" stroke-width="22.65"/></g></g></g>
<g transform="translate(1263.4,916.6) scale(0.07366)"><g clip-path="url(#abclip)"><rect x="0" y="141.4" width="486" height="344.6" fill="url(#slate-dark)"/><rect x="0" y="142.4" width="486" height="9" fill="url(#under-dark)"/><g fill="#dcd7e3"><rect x="24" y="190.3" width="438" height="4.7"/><rect x="169.3" y="192" width="4.7" height="157"/><rect x="314.1" y="192" width="4.7" height="157"/><rect x="24" y="346.4" width="438" height="4.7"/><polygon points="35.6,405.2 450.6,405.2 444.8,409.4 41.4,409.4"/></g><g fill="#e7e1ee"><rect x="80" y="236" width="36" height="74" rx="10"/><rect x="226" y="236" width="36" height="76" rx="10"/><rect x="372" y="236" width="40" height="76" rx="10"/></g><g fill="#dcd7e3"><rect x="24" y="158" width="60" height="16"/><rect x="110" y="158" width="300" height="16"/><rect x="26" y="370" width="80" height="13"/><rect x="135" y="370" width="100" height="16"/><rect x="66" y="425" width="40" height="13"/><rect x="135" y="425" width="122" height="18"/></g><rect x="0" y="0" width="486" height="142.4" fill="#22212c"/><polygon fill="#e4ddf7" points="106.5,0.0 154.3,0.0 183.7,71.6 154.3,142.4 106.5,142.4 135.9,71.6"/><polygon fill="#e4ddf7" points="201.3,0.0 249.1,0.0 278.5,71.6 249.1,142.4 201.3,142.4 230.7,71.6"/><polygon fill="#e4ddf7" points="296.1,0.0 343.9,0.0 373.3,71.6 343.9,142.4 296.1,142.4 325.5,71.6"/><polygon fill="#e4ddf7" points="390.9,0.0 438.7,0.0 468.1,71.6 438.7,142.4 390.9,142.4 420.3,71.6"/><rect x="0" y="0" width="486" height="71.6" fill="url(#armhi)"/><rect x="0" y="71.6" width="486" height="9" fill="url(#armsh)"/><rect x="0" y="70.69999999999999" width="486" height="1.3" fill="#8d8a96" fill-opacity=".8"/><rect x="0" y="137.4" width="486" height="5" fill="url(#armbot)"/><polygon points="40.4,57.2 40.4,113.4 87.3,113.4" transform="translate(-.5,-.7)" fill="#5a5866" stroke="#5a5866" stroke-width="38.6" stroke-linejoin="round"/><polygon points="40.4,57.2 40.4,113.4 87.3,113.4" fill="url(#plate)" stroke="url(#plate)" stroke-width="37.6" stroke-linejoin="round"/><circle cx="40.4" cy="57.2" r="9.7" fill="#d5d2d9"/><circle cx="40.4" cy="113.6" r="9.7" fill="#d5d2d9"/><circle cx="87.3" cy="113.6" r="9.7" fill="#d5d2d9"/></g></g>
<rect x="1203" y="866.2" width="82.3" height="67.2" fill="#fff" fill-opacity=".12" stroke="#fff" stroke-width="1"/>
</svg></div>
<div id="insp">
<div class="abs" style="left:98.50px;top:0.00px;width:99.50px;height:22.40px;background:#f0f0f0;border-bottom:1px solid #e9e9e9;border-left:1px solid #e9e9e9"></div>
<div class="t" style="top:7.31px;font-size:8.4px;color:#222;font-weight:bold;letter-spacing:0.1px;left:49.20px;transform:translateX(-50%);">DESIGN</div>
<div class="t" style="top:7.38px;font-size:8.25px;color:#8c8c8c;font-weight:bold;letter-spacing:0.1px;left:148.50px;transform:translateX(-50%);">PROTOTYPE</div>
<svg style="left:7.30px;top:28.50px;" width="16" height="16" viewBox="0 0 16 16"><path d="M3.2 3.4 V12.6 M12.8 3.4 V12.6" stroke="#b5b5b5" stroke-width="1"/><rect x="6" y="5" width="4" height="6" rx="1.2" fill="none" stroke="#b5b5b5" stroke-width="1"/></svg>
<svg style="left:29.80px;top:28.50px;" width="16" height="16" viewBox="0 0 16 16"><path d="M3.4 3.2 H12.6 M3.4 12.8 H12.6" stroke="#b5b5b5" stroke-width="1"/><rect x="5" y="6" width="6" height="4" rx="1.2" fill="none" stroke="#b5b5b5" stroke-width="1"/></svg>
<svg style="left:46.40px;top:28.50px;" width="16" height="16" viewBox="0 0 16 16"><circle cx="8" cy="5" r=".7" fill="#b5b5b5"/><circle cx="8" cy="8" r=".7" fill="#b5b5b5"/><circle cx="8" cy="11" r=".7" fill="#b5b5b5"/></svg>
<svg style="left:62.70px;top:28.50px;" width="16" height="16" viewBox="0 0 16 16"><path d="M3.6 2.8 V13.2" stroke="#6a6a6a" stroke-width="1.1"/><rect x="5.2" y="5.8" width="7" height="4.4" rx="1.6" fill="none" stroke="#6a6a6a" stroke-width="1.1"/></svg>
<svg style="left:85.70px;top:28.50px;" width="16" height="16" viewBox="0 0 16 16"><path d="M8 2.8 V13.2" stroke="#6a6a6a" stroke-width="1.1"/><rect x="4.2" y="5.8" width="7.6" height="4.4" rx="1.6" fill="#fff" stroke="#6a6a6a" stroke-width="1.1"/></svg>
<svg style="left:108.30px;top:28.50px;" width="16" height="16" viewBox="0 0 16 16"><path d="M12.4 2.8 V13.2" stroke="#6a6a6a" stroke-width="1.1"/><rect x="3.8" y="5.8" width="7" height="4.4" rx="1.6" fill="none" stroke="#6a6a6a" stroke-width="1.1"/></svg>
<svg style="left:129.80px;top:28.50px;" width="16" height="16" viewBox="0 0 16 16"><path d="M2.8 3.4 H13.2" stroke="#6a6a6a" stroke-width="1.1"/><rect x="5.8" y="5" width="4.4" height="7" rx="1.6" fill="none" stroke="#6a6a6a" stroke-width="1.1"/></svg>
<svg style="left:152.30px;top:28.50px;" width="16" height="16" viewBox="0 0 16 16"><path d="M2.8 8 H13.2" stroke="#6a6a6a" stroke-width="1.1"/><rect x="5.8" y="4.2" width="4.4" height="7.6" rx="1.6" fill="#fff" stroke="#6a6a6a" stroke-width="1.1"/></svg>
<svg style="left:174.90px;top:28.50px;" width="16" height="16" viewBox="0 0 16 16"><path d="M2.8 12.6 H13.2" stroke="#6a6a6a" stroke-width="1.1"/><rect x="5.8" y="4" width="4.4" height="7" rx="1.6" fill="none" stroke="#6a6a6a" stroke-width="1.1"/></svg>
<div class="abs" style="left:8.50px;top:52.30px;width:52.00px;height:16.80px;border-radius:4px;background:#eeeeee"></div>
<div class="t" style="top:55.64px;font-size:9.8px;color:#2a2a2a;left:12.70px;">151</div>
<div class="t" style="top:57.38px;font-size:8px;color:#333;font-weight:bold;left:54.00px;transform:translateX(-50%);">X</div>
<div class="abs" style="left:72.90px;top:52.30px;width:52.40px;height:16.80px;border-radius:4px;background:#eeeeee"></div>
<div class="t" style="top:55.64px;font-size:9.8px;color:#2a2a2a;left:77.00px;">150</div>
<div class="t" style="top:57.38px;font-size:8px;color:#333;font-weight:bold;left:118.50px;transform:translateX(-50%);">Y</div>
<div class="abs" style="left:137.80px;top:52.30px;width:52.10px;height:16.80px;border-radius:4px;background:#eeeeee"></div>
<div class="t" style="top:55.64px;font-size:9.8px;color:#2a2a2a;left:142.00px;">0</div>
<div class="t" style="top:57.04px;font-size:9.8px;color:#333;left:184.00px;transform:translateX(-50%);">°</div>
<div class="abs" style="left:8.50px;top:77.50px;width:52.00px;height:17.00px;border-radius:4px;background:#eeeeee"></div>
<div class="t" style="top:81.04px;font-size:9.8px;color:#2a2a2a;left:12.70px;">484</div>
<div class="t" style="top:82.78px;font-size:8px;color:#333;font-weight:bold;left:52.90px;transform:translateX(-50%);">W</div>
<svg style="left:58.70px;top:78.10px;" width="16" height="16" viewBox="0 0 16 16"><rect x="5.2" y="7.6" width="5.6" height="4.6" rx=".9" fill="#6a6a6a"/><path d="M6.2 7.6 V6.2 A1.8 1.8 0 0 1 9.8 6.2 V7.6" fill="none" stroke="#6a6a6a" stroke-width="1"/></svg>
<div class="abs" style="left:72.90px;top:77.50px;width:52.40px;height:17.00px;border-radius:4px;background:#eeeeee"></div>
<div class="t" style="top:81.04px;font-size:9.8px;color:#2a2a2a;left:77.00px;">484</div>
<div class="t" style="top:82.78px;font-size:8px;color:#333;font-weight:bold;left:117.90px;transform:translateX(-50%);">H</div>
<div class="abs" style="left:137.80px;top:77.50px;width:23.70px;height:17.00px;border-radius:4px;background:#eeeeee"></div>
<svg style="left:141.70px;top:78.10px;" width="16" height="16" viewBox="0 0 16 16"><path d="M7 3.8 L3 12 H7Z" fill="none" stroke="#6a6a6a" stroke-width="1" stroke-linejoin="round"/><path d="M9 3.8 L13 12 H9Z" fill="#c9c9c9" stroke="#6a6a6a" stroke-width="1" stroke-linejoin="round"/></svg>
<div class="abs" style="left:165.70px;top:77.50px;width:24.20px;height:17.00px;border-radius:4px;background:#eeeeee"></div>
<svg style="left:169.90px;top:78.10px;" width="16" height="16" viewBox="0 0 16 16"><path d="M12.2 7 L4 3 V7Z" fill="none" stroke="#6a6a6a" stroke-width="1" stroke-linejoin="round"/><path d="M12.2 9 L4 13 V9Z" fill="#c9c9c9" stroke="#6a6a6a" stroke-width="1" stroke-linejoin="round"/></svg>
<div class="abs" style="left:8.50px;top:103.30px;width:52.00px;height:17.20px;border-radius:4px;background:#f5f5f5"></div>
<svg style="left:45.50px;top:103.90px;" width="16" height="16" viewBox="0 0 16 16"><path d="M4.6 8 H11.4 M6 6.6 L4.6 8 L6 9.4 M10 6.6 L11.4 8 L10 9.4" fill="none" stroke="#b5b5b5" stroke-width=".9"/></svg>
<div class="abs" style="left:72.90px;top:103.30px;width:52.40px;height:17.20px;border-radius:4px;background:#f5f5f5"></div>
<svg style="left:110.10px;top:103.90px;" width="16" height="16" viewBox="0 0 16 16"><path d="M8 4.6 V11.4 M6.6 6 L8 4.6 L9.4 6 M6.6 10 L8 11.4 L9.4 10" fill="none" stroke="#b5b5b5" stroke-width=".9"/></svg>
<div class="abs" style="left:137.80px;top:103.30px;width:52.10px;height:17.20px;border-radius:4.5px;background:#fff;box-shadow:0 0 0 .7px #e4e4e4,0 .5px 1px rgba(0,0,0,.08)"></div>
<div class="t" style="top:107.11px;font-size:9.2px;color:#cfcfcf;left:163.80px;transform:translateX(-50%);">Tidy</div>
<div class="abs" style="left:0.50px;top:128.00px;width:197.50px;height:1.00px;background:#e9e9e9"></div>
<div class="t" style="top:139.10px;font-size:8.2px;color:#222;font-weight:bold;letter-spacing:0.15px;left:8.50px;">RESIZING</div>
<svg style="left:174.50px;top:134.10px;" width="16" height="16" viewBox="0 0 16 16"><path d="M4.6 6.7 L8 10.1 L11.4 6.7" fill="none" stroke="#6a6a6a" stroke-width="1.1" stroke-linecap="round" stroke-linejoin="round"/></svg>
<div class="abs" style="left:8.50px;top:155.90px;width:52.00px;height:38.20px;border-radius:4.5px;background:#fff;box-shadow:0 0 0 .7px #dcdcdc,0 .5px 1px rgba(0,0,0,.12)"><svg style="left:0;top:0" width="52" height="38.2" viewBox="0 0 52 38.2"><g stroke="#b5b5b5" stroke-width="1" fill="none"><path d="M19.5 3.6 H32.5 M26 3.6 V9.4 M19.5 34.6 H32.5 M26 34.6 V28.8 M4.4 12.6 V25.6 M4.4 19.1 H10.4 M47.6 12.6 V25.6 M47.6 19.1 H41.6"/><rect x="21" y="14.6" width="10" height="9" rx="1"/></g></svg></div>
<div class="abs" style="left:72.90px;top:155.90px;width:52.40px;height:38.20px;border-radius:4.5px;background:#fff;box-shadow:0 0 0 .7px #dcdcdc,0 .5px 1px rgba(0,0,0,.12)"><svg style="left:0;top:0" width="52.4" height="38.2" viewBox="0 0 52.4 38.2"><g stroke="#b5b5b5" stroke-width="1" fill="none"><path d="M4.6 19.1 H47.8 M4.6 16 V22.2 M47.8 16 V22.2 M26.2 3.8 V34.4 M23 3.8 H29.4 M23 34.4 H29.4"/></g></svg></div>
<div class="abs" style="left:137.80px;top:155.90px;width:52.10px;height:38.20px;border-radius:4px;background:#eeeeee"><svg style="left:0;top:0" width="52" height="38.2" viewBox="0 0 52 38.2"><rect x="4" y="3.6" width="14" height="14" fill="#fff" stroke="#8a8a8a" stroke-width=".8" stroke-dasharray="2 1.8"/><rect x="8" y="7.6" width="6" height="6" fill="#ff5a0a"/></svg></div>
<div class="t" style="top:198.04px;font-size:8px;color:#333;left:34.50px;transform:translateX(-50%);">Pin to Edge</div>
<div class="t" style="top:198.04px;font-size:8px;color:#333;left:98.90px;transform:translateX(-50%);">Fix Size</div>
<div class="t" style="top:198.04px;font-size:8px;color:#333;left:163.80px;transform:translateX(-50%);">Preview</div>
<div class="abs" style="left:0.50px;top:213.40px;width:197.50px;height:1.00px;background:#e9e9e9"></div>
<div class="t" style="top:223.44px;font-size:8.1px;color:#222;font-weight:bold;letter-spacing:0.1px;left:8.50px;">APPEARANCE</div>
<svg style="left:174.50px;top:218.50px;" width="16" height="16" viewBox="0 0 16 16"><path d="M4.6 6.7 L8 10.1 L11.4 6.7" fill="none" stroke="#6a6a6a" stroke-width="1.1" stroke-linecap="round" stroke-linejoin="round"/></svg>
<div class="abs" style="left:8.50px;top:240.20px;width:181.50px;height:30.70px;border-radius:4.5px;background:#fff;box-shadow:0 0 0 .7px #dcdcdc,0 .6px 1.2px rgba(0,0,0,.14)"></div>
<div class="t" style="top:251.53px;font-size:9.6px;color:#2a2a2a;font-style:italic;left:16.40px;">No Layer Style</div>
<svg style="left:172.30px;top:248.10px;" width="16" height="16" viewBox="0 0 16 16"><path d="M5.4 7.1000000000000005 L8 9.700000000000001 L10.6 7.1000000000000005" fill="none" stroke="#6a6a6a" stroke-width="1.1" stroke-linecap="round" stroke-linejoin="round"/></svg>
<svg style="left:21.20px;top:278.40px;" width="16" height="16" viewBox="0 0 16 16"><path d="M8 3.2 V12.8 M3.2 8 H12.8" stroke="#6a6a6a" stroke-width="1" stroke-linecap="round"/></svg>
<svg style="left:67.50px;top:278.40px;" width="16" height="16" viewBox="0 0 16 16"><rect x="2.6" y="3.4" width="10.8" height="8" rx="1.8" fill="none" stroke="#d2d2d2" stroke-width="1"/><path d="M8 10 V6.4 M6.4 7.8 L8 6.2 L9.6 7.8 M6.6 12.6 H9.4" fill="none" stroke="#d2d2d2" stroke-width=".9"/></svg>
<svg style="left:114.10px;top:278.40px;" width="16" height="16" viewBox="0 0 16 16"><path d="M6.6 9.4 L4.6 11.4 A1.6 1.6 0 0 1 2.6 9.2 L5.4 6.4 M9.4 6.6 L11.4 4.6 A1.6 1.6 0 0 1 13.4 6.8 L10.6 9.6 M4 3.4 L5 4.8 M12 12.6 L11 11.2 M3.4 4.6 L4.6 5.4" fill="none" stroke="#d2d2d2" stroke-width=".9" stroke-linecap="round"/></svg>
<svg style="left:160.50px;top:278.40px;" width="16" height="16" viewBox="0 0 16 16"><circle cx="3.6" cy="8" r=".9" fill="#6a6a6a"/><circle cx="8" cy="8" r=".9" fill="#6a6a6a"/><circle cx="12.4" cy="8" r=".9" fill="#6a6a6a"/></svg>
<div class="t" style="top:297.74px;font-size:8px;color:#333;left:29.20px;transform:translateX(-50%);">Create</div>
<div class="t" style="top:297.74px;font-size:8px;color:#d4d4d4;left:75.50px;transform:translateX(-50%);">Update</div>
<div class="t" style="top:297.74px;font-size:8px;color:#d4d4d4;left:122.10px;transform:translateX(-50%);">Detach</div>
<div class="t" style="top:297.74px;font-size:8px;color:#333;left:168.50px;transform:translateX(-50%);">More</div>
<div class="abs" style="left:8.50px;top:315.00px;width:181.50px;height:1.00px;background:#e9e9e9"></div>
<div class="t" style="top:324.44px;font-size:9.8px;color:#2a2a2a;left:8.50px;">Opacity (Normal)</div>
<svg style="left:86.80px;top:321.50px;" width="16" height="16" viewBox="0 0 16 16"><path d="M5.8 6.4 L8 4.2 L10.2 6.4 M5.8 9.6 L8 11.8 L10.2 9.6" fill="none" stroke="#6a6a6a" stroke-width="1" stroke-linecap="round" stroke-linejoin="round"/></svg>
<div class="abs" style="left:8.50px;top:341.90px;width:140.00px;height:2.00px;border-radius:1px;background:#ff4f12"></div>
<div class="abs" style="left:143.50px;top:337.90px;width:10.40px;height:10.40px;border-radius:50%;background:#fff;box-shadow:0 0 0 .5px rgba(0,0,0,.18),0 1px 2px rgba(0,0,0,.25)"></div>
<div class="abs" style="left:158.50px;top:334.70px;width:31.50px;height:16.80px;border-radius:4px;background:#eeeeee"></div>
<div class="t" style="top:338.60px;font-size:9px;color:#2a2a2a;left:174.30px;transform:translateX(-50%);">100%</div>
<div class="abs" style="left:0.50px;top:360.20px;width:197.50px;height:1.00px;background:#e9e9e9"></div>
<div class="t" style="top:371.10px;font-size:8.2px;color:#222;font-weight:bold;letter-spacing:0.15px;left:8.50px;">STYLE</div>
<svg style="left:174.50px;top:366.30px;" width="16" height="16" viewBox="0 0 16 16"><path d="M4.6 6.7 L8 10.1 L11.4 6.7" fill="none" stroke="#6a6a6a" stroke-width="1.1" stroke-linecap="round" stroke-linejoin="round"/></svg>
<div class="abs" style="left:8.50px;top:387.50px;width:181.50px;height:1.00px;background:#e9e9e9"></div>
<div class="t" style="top:395.44px;font-size:9.8px;color:#8a8a8a;left:8.50px;">Fills</div>
<svg style="left:114.90px;top:392.50px;" width="16" height="16" viewBox="0 0 16 16"><path d="M8 3 L13.4 5.6 L8 8.2 L2.6 5.6Z" fill="#c9c9c9" stroke="#6a6a6a" stroke-width=".9" stroke-linejoin="round"/><path d="M2.6 8 L8 10.6 L13.4 8 M2.6 10.4 L8 13 L13.4 10.4" fill="none" stroke="#6a6a6a" stroke-width=".9" stroke-linejoin="round"/></svg>
<svg style="left:134.70px;top:392.50px;" width="16" height="16" viewBox="0 0 16 16"><path d="M8 2.6 L12.7 5.3 V10.7 L8 13.4 L3.3 10.7 V5.3Z" fill="none" stroke="#6a6a6a" stroke-width="1" stroke-linejoin="round"/><circle cx="8" cy="8" r="2.2" fill="none" stroke="#6a6a6a" stroke-width="1"/></svg>
<svg style="left:154.70px;top:392.50px;" width="16" height="16" viewBox="0 0 16 16"><circle cx="6.2" cy="8" r="3.6" fill="none" stroke="#6a6a6a" stroke-width="1"/><circle cx="9.8" cy="8" r="3.6" fill="none" stroke="#6a6a6a" stroke-width="1"/><path d="M4.6 12.4 L11.4 3.6" stroke="#6a6a6a" stroke-width="1"/></svg>
<svg style="left:174.50px;top:392.50px;" width="16" height="16" viewBox="0 0 16 16"><path d="M8 3.4 V12.6 M3.4 8 H12.6" stroke="#6a6a6a" stroke-width="1" stroke-linecap="round"/></svg>
<svg style="left:5.20px;top:414.80px;" width="16" height="16" viewBox="0 0 16 16"><rect x="3.4" y="3.4" width="9.2" height="9.2" rx="2" fill="#ff5a0a"/><path d="M5.6 8.2 L7.4 10 L10.6 5.8" fill="none" stroke="#fff" stroke-width="1.4" stroke-linecap="round" stroke-linejoin="round"/></svg>
<div class="abs" style="left:24.50px;top:414.10px;width:42.40px;height:17.40px;border-radius:4.5px;background:#fff;box-shadow:0 0 0 .7px #d6d6d6,0 .5px 1px rgba(0,0,0,.12);overflow:hidden"><div class="abs" style="left:0;top:0;width:30.4px;height:16.4px;border-radius:4px 0 0 4px;background:radial-gradient(circle at 50% 50%,#f2f2f2 0,#d6d6d6 40%,#a9a9a9 100%)"></div><svg style="left:31.6px;top:3.7px" width="9" height="9" viewBox="0 0 9 9"><rect x="1" y="1.6" width="3.4" height="5.6" rx="1" fill="none" stroke="#6a6a6a" stroke-width=".9"/><rect x="1.8" y="2.6" width="1.8" height="1.6" fill="#6a6a6a"/><path d="M5.8 2.6 L8 4.4 L5.8 6.2Z" fill="#6a6a6a"/></svg></div>
<div class="abs" style="left:72.20px;top:414.10px;width:81.00px;height:17.40px;border-radius:4.5px;background:#fff;box-shadow:0 0 0 .7px #dcdcdc,0 .5px 1px rgba(0,0,0,.12)"></div>
<div class="t" style="top:417.92px;font-size:9.4px;color:#2a2a2a;left:76.50px;">Radial</div>
<svg style="left:138.10px;top:414.80px;" width="16" height="16" viewBox="0 0 16 16"><path d="M5.8 6.4 L8 4.2 L10.2 6.4 M5.8 9.6 L8 11.8 L10.2 9.6" fill="none" stroke="#6a6a6a" stroke-width="1" stroke-linecap="round" stroke-linejoin="round"/></svg>
<div class="abs" style="left:158.50px;top:414.10px;width:31.50px;height:17.40px;border-radius:4px;background:#eeeeee"></div>
<div class="t" style="top:418.10px;font-size:9px;color:#2a2a2a;left:174.30px;transform:translateX(-50%);">100%</div>
<div class="t" style="top:435.24px;font-size:8px;color:#333;left:45.80px;transform:translateX(-50%);">Gradient</div>
<div class="t" style="top:435.24px;font-size:8px;color:#333;left:112.50px;transform:translateX(-50%);">Type</div>
<div class="t" style="top:435.24px;font-size:8px;color:#333;left:173.90px;transform:translateX(-50%);">Opacity</div>
<div class="abs" style="left:8.50px;top:449.70px;width:181.50px;height:1.00px;background:#e9e9e9"></div>
<div class="t" style="top:458.64px;font-size:9.8px;color:#8a8a8a;left:8.50px;">Borders</div>
<svg style="left:174.50px;top:455.50px;" width="16" height="16" viewBox="0 0 16 16"><path d="M8 3.4 V12.6 M3.4 8 H12.6" stroke="#6a6a6a" stroke-width="1" stroke-linecap="round"/></svg>
<div class="abs" style="left:8.50px;top:476.50px;width:181.50px;height:1.00px;background:#e9e9e9"></div>
<div class="t" style="top:484.84px;font-size:9.8px;color:#8a8a8a;left:8.50px;">Shadows</div>
<svg style="left:174.50px;top:481.70px;" width="16" height="16" viewBox="0 0 16 16"><path d="M8 3.4 V12.6 M3.4 8 H12.6" stroke="#6a6a6a" stroke-width="1" stroke-linecap="round"/></svg>
<div class="abs" style="left:8.50px;top:503.40px;width:181.50px;height:1.00px;background:#e9e9e9"></div>
<div class="t" style="top:511.74px;font-size:9.8px;color:#8a8a8a;left:8.50px;">Inner Shadows</div>
<svg style="left:154.70px;top:508.50px;" width="16" height="16" viewBox="0 0 16 16"><circle cx="6.2" cy="8" r="3.6" fill="none" stroke="#6a6a6a" stroke-width="1"/><circle cx="9.8" cy="8" r="3.6" fill="none" stroke="#6a6a6a" stroke-width="1"/><path d="M4.6 12.4 L11.4 3.6" stroke="#6a6a6a" stroke-width="1"/></svg>
<svg style="left:174.50px;top:508.50px;" width="16" height="16" viewBox="0 0 16 16"><path d="M8 3.4 V12.6 M3.4 8 H12.6" stroke="#6a6a6a" stroke-width="1" stroke-linecap="round"/></svg>
<svg style="left:5.20px;top:531.00px;" width="16" height="16" viewBox="0 0 16 16"><rect x="3.4" y="3.4" width="9.2" height="9.2" rx="2" fill="#ff5a0a"/><path d="M5.6 8.2 L7.4 10 L10.6 5.8" fill="none" stroke="#fff" stroke-width="1.4" stroke-linecap="round" stroke-linejoin="round"/></svg>
<div class="abs" style="left:24.50px;top:530.30px;width:42.40px;height:17.40px;border-radius:4.5px;background:#fff;box-shadow:0 0 0 .7px #d6d6d6,0 .5px 1px rgba(0,0,0,.12);overflow:hidden"><div class="abs" style="left:0;top:0;width:30.4px;height:16.4px;border-radius:4px 0 0 4px;background-color:#fbfbfb;background-image:linear-gradient(45deg,#ececec 25%,transparent 25%,transparent 75%,#ececec 75%),linear-gradient(45deg,#ececec 25%,transparent 25%,transparent 75%,#ececec 75%);background-size:8px 8px;background-position:0 0,4px 4px"></div><svg style="left:31.6px;top:3.7px" width="9" height="9" viewBox="0 0 9 9"><rect x="1" y="1.6" width="3.4" height="5.6" rx="1" fill="none" stroke="#6a6a6a" stroke-width=".9"/><rect x="1.8" y="2.6" width="1.8" height="1.6" fill="#6a6a6a"/><path d="M5.8 2.6 L8 4.4 L5.8 6.2Z" fill="#6a6a6a"/></svg></div>
<div class="abs" style="left:72.20px;top:530.30px;width:24.30px;height:17.40px;border-radius:4px;background:#eeeeee"></div>
<div class="t" style="top:534.12px;font-size:9.4px;color:#2a2a2a;left:76.40px;">0</div>
<div class="abs" style="left:103.00px;top:530.30px;width:24.20px;height:17.40px;border-radius:4px;background:#eeeeee"></div>
<div class="t" style="top:534.12px;font-size:9.4px;color:#2a2a2a;left:107.20px;">0</div>
<div class="abs" style="left:133.50px;top:530.30px;width:24.70px;height:17.40px;border-radius:4px;background:#eeeeee"></div>
<div class="t" style="top:534.12px;font-size:9.4px;color:#2a2a2a;left:137.70px;">30</div>
<div class="abs" style="left:164.20px;top:530.30px;width:24.70px;height:17.40px;border-radius:4px;background:#eeeeee"></div>
<div class="t" style="top:534.12px;font-size:9.4px;color:#2a2a2a;left:168.40px;">0</div>
<div class="t" style="top:551.24px;font-size:8px;color:#333;left:45.80px;transform:translateX(-50%);">Color</div>
<div class="t" style="top:551.24px;font-size:8px;color:#333;left:84.30px;transform:translateX(-50%);">X</div>
<div class="t" style="top:551.24px;font-size:8px;color:#333;left:115.00px;transform:translateX(-50%);">Y</div>
<div class="t" style="top:551.24px;font-size:8px;color:#333;left:145.70px;transform:translateX(-50%);">Blur</div>
<div class="t" style="top:551.24px;font-size:8px;color:#333;left:176.10px;transform:translateX(-50%);">Spread</div>
<div class="abs" style="left:8.50px;top:566.40px;width:181.50px;height:1.00px;background:#e9e9e9"></div>
<div class="t" style="top:574.44px;font-size:9.8px;color:#8a8a8a;left:8.50px;">Blur</div>
<svg style="left:174.50px;top:571.10px;" width="16" height="16" viewBox="0 0 16 16"><path d="M4 4.6 H12 M6.4 4.6 V3.6 A.8 .8 0 0 1 7.2 2.8 H8.8 A.8 .8 0 0 1 9.6 3.6 V4.6 M4.8 4.8 L5.4 12.2 A1 1 0 0 0 6.4 13.2 H9.6 A1 1 0 0 0 10.6 12.2 L11.2 4.8" fill="none" stroke="#6a6a6a" stroke-width="1" stroke-linecap="round" stroke-linejoin="round"/></svg>
<div class="t" style="top:591.17px;font-size:9.5px;color:#2a2a2a;left:8.50px;">Gaussian Blur</div>
<svg style="left:71.10px;top:588.10px;" width="16" height="16" viewBox="0 0 16 16"><path d="M5.8 6.4 L8 4.2 L10.2 6.4 M5.8 9.6 L8 11.8 L10.2 9.6" fill="none" stroke="#6a6a6a" stroke-width="1" stroke-linecap="round" stroke-linejoin="round"/></svg>
<div class="abs" style="left:8.50px;top:606.90px;width:140.40px;height:1.60px;border-radius:1px;background:#e3e3e3"></div>
<div class="abs" style="left:8.50px;top:606.70px;width:14.00px;height:2.00px;border-radius:1px;background:#ff4f12"></div>
<div class="abs" style="left:20.50px;top:602.50px;width:10.40px;height:10.40px;border-radius:50%;background:#fff;box-shadow:0 0 0 .5px rgba(0,0,0,.18),0 1px 2px rgba(0,0,0,.25)"></div>
<div class="abs" style="left:154.30px;top:599.80px;width:35.70px;height:16.50px;border-radius:4px;background:#eeeeee"></div>
<div class="t" style="top:603.22px;font-size:9.4px;color:#2a2a2a;left:158.50px;">5</div>
<div class="abs" style="left:0.50px;top:628.70px;width:197.50px;height:1.00px;background:#e9e9e9"></div>
<div class="t" style="top:639.30px;font-size:8.2px;color:#222;font-weight:bold;letter-spacing:0.05px;left:8.50px;">MAKE EXPORTABLE</div>
<svg style="left:174.50px;top:634.70px;" width="16" height="16" viewBox="0 0 16 16"><path d="M8 3.4 V12.6 M3.4 8 H12.6" stroke="#6a6a6a" stroke-width="1" stroke-linecap="round"/></svg>
</div>
</div>
</body></html>
